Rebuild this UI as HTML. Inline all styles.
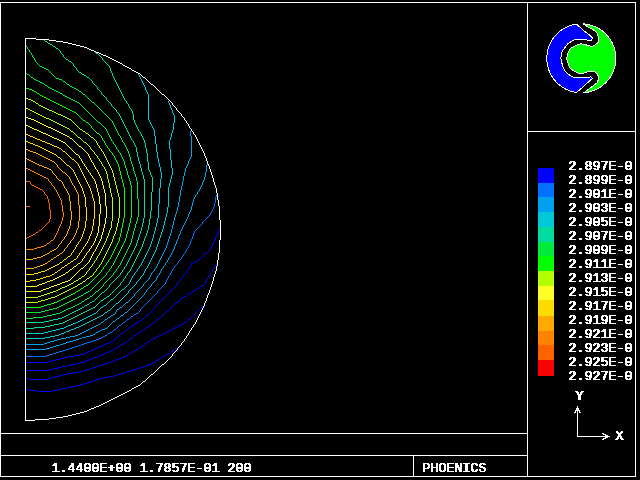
<!DOCTYPE html>
<html><head><meta charset="utf-8"><title>PHOENICS</title>
<style>
html,body{margin:0;padding:0;background:#000;}
body{width:640px;height:480px;overflow:hidden;position:relative;}
svg{position:absolute;left:0;top:0;display:block;}
text{font-family:"Liberation Mono","DejaVu Sans Mono",monospace;font-weight:normal;font-size:13.33px;fill:#fff;white-space:pre;}
</style></head><body>
<svg width="640" height="480" viewBox="0 0 640 480">
<defs><filter id="px" x="0" y="0" width="640" height="480" filterUnits="userSpaceOnUse" color-interpolation-filters="sRGB"><feComponentTransfer result="t"><feFuncR type="discrete" tableValues="1 1"/><feFuncG type="discrete" tableValues="1 1"/><feFuncB type="discrete" tableValues="1 1"/><feFuncA type="discrete" tableValues="0 0 0 0 1 1 1 1 1 1"/></feComponentTransfer><feOffset in="t" dx="1" dy="0" result="o"/><feMerge><feMergeNode in="t"/><feMergeNode in="o"/></feMerge></filter></defs>
<rect x="0" y="0" width="640" height="480" fill="#000"/>

<g fill="#fff" shape-rendering="crispEdges">
<rect x="0" y="2" width="636" height="1"/>
<rect x="0" y="476" width="636" height="1"/>
<rect x="0" y="2" width="1" height="475"/>
<rect x="635" y="2" width="1" height="475"/>
<rect x="527" y="2" width="1" height="475"/>
<rect x="0" y="433" width="528" height="1"/>
<rect x="0" y="455" width="528" height="1"/>
<rect x="413" y="455" width="1" height="22"/>
<rect x="527" y="131" width="109" height="1"/>
</g>
<g shape-rendering="crispEdges">
<path fill="rgb(255,98,0)" d="M26,206h4v1h-4z"/>
<path fill="rgb(255,98,0)" d="M26,181h4v1h-4zM30,182h1v1h-1zM30,183h1v1h-1zM31,184h1v1h-1zM32,185h2v1h-2zM34,186h2v1h-2zM36,187h2v1h-2zM38,188h2v1h-2zM40,189h2v1h-2zM42,190h1v1h-1zM43,191h1v1h-1zM44,192h1v1h-1zM44,193h1v1h-1zM45,194h1v1h-1zM46,195h1v1h-1zM47,196h1v1h-1zM47,197h1v1h-1zM47,198h1v1h-1zM48,199h1v1h-1zM48,200h1v1h-1zM48,201h1v1h-1zM48,202h1v1h-1zM49,203h1v1h-1zM49,204h1v1h-1zM49,205h1v1h-1zM49,206h1v1h-1zM49,207h1v1h-1zM49,208h1v1h-1zM49,209h1v1h-1zM50,210h1v1h-1zM50,211h1v1h-1zM50,212h1v1h-1zM50,213h1v1h-1zM50,214h1v1h-1zM50,215h1v1h-1zM50,216h1v1h-1zM50,217h1v1h-1zM50,218h1v1h-1zM49,219h1v1h-1zM49,220h1v1h-1zM49,221h1v1h-1zM48,222h1v1h-1zM47,223h1v1h-1zM46,224h1v1h-1zM45,225h1v1h-1zM44,226h1v1h-1zM43,227h1v1h-1zM42,228h1v1h-1zM41,229h1v1h-1zM39,230h2v1h-2zM38,231h1v1h-1zM36,232h2v1h-2zM35,233h1v1h-1zM33,234h2v1h-2zM31,235h2v1h-2zM29,236h2v1h-2zM27,237h2v1h-2zM26,238h1v1h-1z"/>
<path fill="rgb(255,130,0)" d="M26,168h2v1h-2zM28,169h2v1h-2zM30,170h2v1h-2zM32,171h2v1h-2zM34,172h2v1h-2zM36,173h2v1h-2zM38,174h2v1h-2zM40,175h2v1h-2zM42,176h2v1h-2zM44,177h2v1h-2zM46,178h2v1h-2zM48,179h1v1h-1zM48,180h1v1h-1zM49,181h1v1h-1zM50,182h1v1h-1zM51,183h1v1h-1zM51,184h1v1h-1zM52,185h1v1h-1zM53,186h1v1h-1zM54,187h1v1h-1zM54,188h1v1h-1zM55,189h1v1h-1zM56,190h1v1h-1zM56,191h1v1h-1zM57,192h1v1h-1zM57,193h1v1h-1zM58,194h1v1h-1zM58,195h1v1h-1zM59,196h1v1h-1zM59,197h1v1h-1zM60,198h1v1h-1zM60,199h1v1h-1zM61,200h1v1h-1zM61,201h1v1h-1zM61,202h1v1h-1zM61,203h1v1h-1zM61,204h1v1h-1zM62,205h1v1h-1zM62,206h1v1h-1zM62,207h1v1h-1zM62,208h1v1h-1zM62,209h1v1h-1zM62,210h1v1h-1zM62,211h1v1h-1zM63,212h1v1h-1zM63,213h1v1h-1zM63,214h1v1h-1zM63,215h1v1h-1zM63,216h1v1h-1zM62,217h1v1h-1zM62,218h1v1h-1zM62,219h1v1h-1zM62,220h1v1h-1zM61,221h1v1h-1zM61,222h1v1h-1zM61,223h1v1h-1zM60,224h1v1h-1zM60,225h1v1h-1zM59,226h1v1h-1zM59,227h1v1h-1zM58,228h1v1h-1zM58,229h1v1h-1zM58,230h1v1h-1zM57,231h1v1h-1zM57,232h1v1h-1zM56,233h1v1h-1zM56,234h1v1h-1zM55,235h1v1h-1zM55,236h1v1h-1zM54,237h1v1h-1zM54,238h1v1h-1zM53,239h1v1h-1zM51,240h2v1h-2zM50,241h1v1h-1zM49,242h1v1h-1zM47,243h2v1h-2zM46,244h1v1h-1zM44,245h2v1h-2zM41,246h3v1h-3zM37,247h4v1h-4zM34,248h3v1h-3zM26,249h8v1h-8z"/>
<path fill="rgb(255,170,0)" d="M26,158h1v1h-1zM27,159h2v1h-2zM29,160h2v1h-2zM31,161h2v1h-2zM33,162h2v1h-2zM35,163h2v1h-2zM37,164h2v1h-2zM39,165h3v1h-3zM42,166h2v1h-2zM44,167h3v1h-3zM47,168h2v1h-2zM49,169h2v1h-2zM51,170h1v1h-1zM52,171h1v1h-1zM52,172h1v1h-1zM53,173h1v1h-1zM54,174h1v1h-1zM55,175h1v1h-1zM56,176h1v1h-1zM56,177h1v1h-1zM57,178h1v1h-1zM58,179h1v1h-1zM59,180h2v1h-2zM61,181h1v1h-1zM62,182h1v1h-1zM62,183h1v1h-1zM63,184h1v1h-1zM63,185h1v1h-1zM64,186h1v1h-1zM64,187h1v1h-1zM65,188h1v1h-1zM66,189h1v1h-1zM66,190h1v1h-1zM67,191h1v1h-1zM67,192h1v1h-1zM68,193h1v1h-1zM68,194h1v1h-1zM69,195h1v1h-1zM69,196h1v1h-1zM69,197h1v1h-1zM69,198h1v1h-1zM69,199h1v1h-1zM69,200h1v1h-1zM70,201h1v1h-1zM70,202h1v1h-1zM70,203h1v1h-1zM70,204h1v1h-1zM70,205h1v1h-1zM70,206h1v1h-1zM70,207h1v1h-1zM70,208h1v1h-1zM70,209h1v1h-1zM70,210h1v1h-1zM71,211h1v1h-1zM71,212h1v1h-1zM71,213h1v1h-1zM71,214h1v1h-1zM71,215h1v1h-1zM71,216h1v1h-1zM71,217h1v1h-1zM71,218h1v1h-1zM71,219h1v1h-1zM70,220h1v1h-1zM70,221h1v1h-1zM70,222h1v1h-1zM70,223h1v1h-1zM70,224h1v1h-1zM70,225h1v1h-1zM69,226h1v1h-1zM69,227h1v1h-1zM69,228h1v1h-1zM68,229h1v1h-1zM68,230h1v1h-1zM67,231h1v1h-1zM67,232h1v1h-1zM67,233h1v1h-1zM66,234h1v1h-1zM66,235h1v1h-1zM65,236h1v1h-1zM64,237h1v1h-1zM64,238h1v1h-1zM63,239h1v1h-1zM62,240h1v1h-1zM61,241h1v1h-1zM61,242h1v1h-1zM60,243h1v1h-1zM59,244h1v1h-1zM58,245h1v1h-1zM58,246h1v1h-1zM57,247h1v1h-1zM56,248h1v1h-1zM54,249h2v1h-2zM52,250h2v1h-2zM50,251h2v1h-2zM49,252h1v1h-1zM47,253h2v1h-2zM45,254h2v1h-2zM43,255h2v1h-2zM41,256h2v1h-2zM37,257h4v1h-4zM33,258h4v1h-4zM26,259h7v1h-7z"/>
<path fill="rgb(255,170,0)" d="M26,149h2v1h-2zM28,150h2v1h-2zM30,151h3v1h-3zM33,152h3v1h-3zM36,153h2v1h-2zM38,154h2v1h-2zM40,155h2v1h-2zM42,156h2v1h-2zM44,157h2v1h-2zM46,158h2v1h-2zM48,159h2v1h-2zM50,160h2v1h-2zM52,161h2v1h-2zM54,162h1v1h-1zM55,163h1v1h-1zM56,164h1v1h-1zM57,165h1v1h-1zM57,166h1v1h-1zM58,167h1v1h-1zM59,168h1v1h-1zM60,169h1v1h-1zM61,170h1v1h-1zM62,171h1v1h-1zM63,172h2v1h-2zM65,173h1v1h-1zM66,174h1v1h-1zM67,175h1v1h-1zM68,176h1v1h-1zM69,177h1v1h-1zM69,178h1v1h-1zM70,179h1v1h-1zM70,180h1v1h-1zM71,181h1v1h-1zM71,182h1v1h-1zM72,183h1v1h-1zM72,184h1v1h-1zM73,185h1v1h-1zM74,186h1v1h-1zM74,187h1v1h-1zM75,188h1v1h-1zM75,189h1v1h-1zM76,190h1v1h-1zM76,191h1v1h-1zM77,192h1v1h-1zM77,193h1v1h-1zM78,194h1v1h-1zM78,195h1v1h-1zM78,196h1v1h-1zM78,197h1v1h-1zM78,198h1v1h-1zM78,199h1v1h-1zM78,200h1v1h-1zM78,201h1v1h-1zM78,202h1v1h-1zM78,203h1v1h-1zM78,204h1v1h-1zM79,205h1v1h-1zM79,206h1v1h-1zM79,207h1v1h-1zM79,208h1v1h-1zM79,209h1v1h-1zM79,210h1v1h-1zM79,211h1v1h-1zM79,212h1v1h-1zM79,213h1v1h-1zM79,214h1v1h-1zM79,215h1v1h-1zM79,216h1v1h-1zM79,217h1v1h-1zM79,218h1v1h-1zM79,219h1v1h-1zM79,220h1v1h-1zM78,221h1v1h-1zM78,222h1v1h-1zM78,223h1v1h-1zM78,224h1v1h-1zM78,225h1v1h-1zM78,226h1v1h-1zM78,227h1v1h-1zM77,228h1v1h-1zM77,229h1v1h-1zM76,230h1v1h-1zM76,231h1v1h-1zM76,232h1v1h-1zM75,233h1v1h-1zM75,234h1v1h-1zM74,235h1v1h-1zM74,236h1v1h-1zM73,237h1v1h-1zM73,238h1v1h-1zM72,239h1v1h-1zM71,240h1v1h-1zM70,241h1v1h-1zM70,242h1v1h-1zM69,243h1v1h-1zM68,244h1v1h-1zM67,245h1v1h-1zM67,246h1v1h-1zM66,247h1v1h-1zM65,248h1v1h-1zM64,249h1v1h-1zM64,250h1v1h-1zM63,251h1v1h-1zM62,252h1v1h-1zM60,253h2v1h-2zM59,254h1v1h-1zM57,255h2v1h-2zM56,256h1v1h-1zM54,257h2v1h-2zM53,258h1v1h-1zM51,259h2v1h-2zM50,260h1v1h-1zM48,261h2v1h-2zM47,262h1v1h-1zM45,263h2v1h-2zM43,264h2v1h-2zM40,265h3v1h-3zM37,266h3v1h-3zM34,267h3v1h-3zM26,268h8v1h-8z"/>
<path fill="rgb(255,220,0)" d="M26,141h2v1h-2zM28,142h2v1h-2zM30,143h3v1h-3zM33,144h2v1h-2zM35,145h3v1h-3zM38,146h2v1h-2zM40,147h2v1h-2zM42,148h2v1h-2zM44,149h2v1h-2zM46,150h2v1h-2zM48,151h2v1h-2zM50,152h2v1h-2zM52,153h2v1h-2zM54,154h2v1h-2zM56,155h1v1h-1zM57,156h1v1h-1zM58,157h2v1h-2zM60,158h1v1h-1zM61,159h1v1h-1zM62,160h1v1h-1zM63,161h1v1h-1zM64,162h1v1h-1zM65,163h1v1h-1zM66,164h1v1h-1zM67,165h2v1h-2zM69,166h1v1h-1zM70,167h1v1h-1zM71,168h1v1h-1zM72,169h1v1h-1zM73,170h1v1h-1zM73,171h1v1h-1zM74,172h1v1h-1zM74,173h1v1h-1zM75,174h1v1h-1zM75,175h1v1h-1zM76,176h1v1h-1zM76,177h1v1h-1zM77,178h1v1h-1zM77,179h1v1h-1zM78,180h1v1h-1zM78,181h1v1h-1zM79,182h1v1h-1zM79,183h1v1h-1zM80,184h1v1h-1zM80,185h1v1h-1zM81,186h1v1h-1zM81,187h1v1h-1zM82,188h1v1h-1zM82,189h1v1h-1zM82,190h1v1h-1zM83,191h1v1h-1zM83,192h1v1h-1zM83,193h1v1h-1zM84,194h1v1h-1zM84,195h1v1h-1zM84,196h1v1h-1zM85,197h1v1h-1zM85,198h1v1h-1zM85,199h1v1h-1zM85,200h1v1h-1zM85,201h1v1h-1zM85,202h1v1h-1zM85,203h1v1h-1zM85,204h1v1h-1zM85,205h1v1h-1zM85,206h1v1h-1zM86,207h1v1h-1zM86,208h1v1h-1zM86,209h1v1h-1zM86,210h1v1h-1zM86,211h1v1h-1zM86,212h1v1h-1zM86,213h1v1h-1zM86,214h1v1h-1zM86,215h1v1h-1zM86,216h1v1h-1zM86,217h1v1h-1zM86,218h1v1h-1zM86,219h1v1h-1zM86,220h1v1h-1zM85,221h1v1h-1zM85,222h1v1h-1zM85,223h1v1h-1zM85,224h1v1h-1zM85,225h1v1h-1zM85,226h1v1h-1zM85,227h1v1h-1zM84,228h1v1h-1zM84,229h1v1h-1zM84,230h1v1h-1zM83,231h1v1h-1zM83,232h1v1h-1zM83,233h1v1h-1zM82,234h1v1h-1zM82,235h1v1h-1zM82,236h1v1h-1zM81,237h1v1h-1zM81,238h1v1h-1zM80,239h1v1h-1zM80,240h1v1h-1zM79,241h1v1h-1zM78,242h1v1h-1zM78,243h1v1h-1zM77,244h1v1h-1zM76,245h1v1h-1zM76,246h1v1h-1zM75,247h1v1h-1zM75,248h1v1h-1zM74,249h1v1h-1zM73,250h1v1h-1zM73,251h1v1h-1zM72,252h1v1h-1zM71,253h1v1h-1zM71,254h1v1h-1zM70,255h1v1h-1zM68,256h2v1h-2zM67,257h1v1h-1zM66,258h1v1h-1zM64,259h2v1h-2zM63,260h1v1h-1zM62,261h1v1h-1zM60,262h2v1h-2zM59,263h1v1h-1zM57,264h2v1h-2zM55,265h2v1h-2zM53,266h2v1h-2zM51,267h2v1h-2zM49,268h2v1h-2zM47,269h2v1h-2zM45,270h2v1h-2zM41,271h4v1h-4zM38,272h3v1h-3zM34,273h4v1h-4zM26,274h8v1h-8z"/>
<path fill="rgb(255,220,0)" d="M26,134h2v1h-2zM28,135h2v1h-2zM30,136h3v1h-3zM33,137h2v1h-2zM35,138h2v1h-2zM37,139h3v1h-3zM40,140h2v1h-2zM42,141h3v1h-3zM45,142h2v1h-2zM47,143h3v1h-3zM50,144h2v1h-2zM52,145h2v1h-2zM54,146h3v1h-3zM57,147h2v1h-2zM59,148h2v1h-2zM61,149h1v1h-1zM62,150h1v1h-1zM63,151h2v1h-2zM65,152h1v1h-1zM66,153h1v1h-1zM67,154h1v1h-1zM68,155h1v1h-1zM69,156h1v1h-1zM70,157h1v1h-1zM71,158h1v1h-1zM72,159h2v1h-2zM74,160h1v1h-1zM75,161h1v1h-1zM76,162h1v1h-1zM77,163h1v1h-1zM78,164h1v1h-1zM78,165h1v1h-1zM79,166h1v1h-1zM79,167h1v1h-1zM80,168h1v1h-1zM80,169h1v1h-1zM81,170h1v1h-1zM81,171h1v1h-1zM82,172h1v1h-1zM82,173h1v1h-1zM83,174h1v1h-1zM83,175h1v1h-1zM84,176h1v1h-1zM84,177h1v1h-1zM85,178h1v1h-1zM85,179h1v1h-1zM86,180h1v1h-1zM86,181h1v1h-1zM87,182h1v1h-1zM87,183h1v1h-1zM88,184h1v1h-1zM88,185h1v1h-1zM89,186h1v1h-1zM89,187h1v1h-1zM90,188h1v1h-1zM90,189h1v1h-1zM90,190h1v1h-1zM91,191h1v1h-1zM91,192h1v1h-1zM91,193h1v1h-1zM92,194h1v1h-1zM92,195h1v1h-1zM92,196h1v1h-1zM92,197h1v1h-1zM93,198h1v1h-1zM93,199h1v1h-1zM93,200h1v1h-1zM94,201h1v1h-1zM94,202h1v1h-1zM94,203h1v1h-1zM94,204h1v1h-1zM94,205h1v1h-1zM94,206h1v1h-1zM94,207h1v1h-1zM94,208h1v1h-1zM94,209h1v1h-1zM94,210h1v1h-1zM94,211h1v1h-1zM94,212h1v1h-1zM94,213h1v1h-1zM94,214h1v1h-1zM94,215h1v1h-1zM94,216h1v1h-1zM94,217h1v1h-1zM94,218h1v1h-1zM93,219h1v1h-1zM93,220h1v1h-1zM93,221h1v1h-1zM93,222h1v1h-1zM93,223h1v1h-1zM93,224h1v1h-1zM93,225h1v1h-1zM92,226h1v1h-1zM92,227h1v1h-1zM92,228h1v1h-1zM92,229h1v1h-1zM92,230h1v1h-1zM91,231h1v1h-1zM91,232h1v1h-1zM91,233h1v1h-1zM90,234h1v1h-1zM90,235h1v1h-1zM89,236h1v1h-1zM89,237h1v1h-1zM89,238h1v1h-1zM88,239h1v1h-1zM88,240h1v1h-1zM87,241h1v1h-1zM87,242h1v1h-1zM86,243h1v1h-1zM85,244h1v1h-1zM85,245h1v1h-1zM84,246h1v1h-1zM83,247h1v1h-1zM83,248h1v1h-1zM82,249h1v1h-1zM81,250h1v1h-1zM81,251h1v1h-1zM80,252h1v1h-1zM79,253h1v1h-1zM79,254h1v1h-1zM78,255h1v1h-1zM77,256h1v1h-1zM77,257h1v1h-1zM76,258h1v1h-1zM74,259h2v1h-2zM73,260h1v1h-1zM71,261h2v1h-2zM70,262h1v1h-1zM68,263h2v1h-2zM67,264h1v1h-1zM65,265h2v1h-2zM64,266h1v1h-1zM62,267h2v1h-2zM61,268h1v1h-1zM60,269h1v1h-1zM58,270h2v1h-2zM57,271h1v1h-1zM55,272h2v1h-2zM54,273h1v1h-1zM52,274h2v1h-2zM50,275h2v1h-2zM46,276h4v1h-4zM43,277h3v1h-3zM40,278h3v1h-3zM36,279h4v1h-4zM30,280h6v1h-6zM26,281h4v1h-4z"/>
<path fill="rgb(255,255,40)" d="M26,125h2v1h-2zM28,126h2v1h-2zM30,127h2v1h-2zM32,128h2v1h-2zM34,129h3v1h-3zM37,130h2v1h-2zM39,131h2v1h-2zM41,132h2v1h-2zM43,133h3v1h-3zM46,134h2v1h-2zM48,135h2v1h-2zM50,136h2v1h-2zM52,137h2v1h-2zM54,138h3v1h-3zM57,139h2v1h-2zM59,140h2v1h-2zM61,141h2v1h-2zM63,142h2v1h-2zM65,143h1v1h-1zM66,144h1v1h-1zM67,145h1v1h-1zM68,146h1v1h-1zM69,147h1v1h-1zM70,148h1v1h-1zM71,149h1v1h-1zM72,150h1v1h-1zM73,151h1v1h-1zM74,152h1v1h-1zM75,153h1v1h-1zM76,154h2v1h-2zM78,155h1v1h-1zM79,156h1v1h-1zM79,157h1v1h-1zM80,158h1v1h-1zM81,159h1v1h-1zM81,160h1v1h-1zM82,161h1v1h-1zM82,162h1v1h-1zM83,163h1v1h-1zM84,164h1v1h-1zM84,165h1v1h-1zM85,166h1v1h-1zM86,167h1v1h-1zM86,168h1v1h-1zM87,169h1v1h-1zM88,170h1v1h-1zM88,171h1v1h-1zM89,172h1v1h-1zM90,173h1v1h-1zM90,174h1v1h-1zM91,175h1v1h-1zM92,176h1v1h-1zM92,177h1v1h-1zM93,178h1v1h-1zM94,179h1v1h-1zM94,180h1v1h-1zM95,181h1v1h-1zM95,182h1v1h-1zM95,183h1v1h-1zM96,184h1v1h-1zM96,185h1v1h-1zM96,186h1v1h-1zM96,187h1v1h-1zM97,188h1v1h-1zM97,189h1v1h-1zM97,190h1v1h-1zM97,191h1v1h-1zM98,192h1v1h-1zM98,193h1v1h-1zM98,194h1v1h-1zM98,195h1v1h-1zM99,196h1v1h-1zM99,197h1v1h-1zM99,198h1v1h-1zM99,199h1v1h-1zM99,200h1v1h-1zM99,201h1v1h-1zM99,202h1v1h-1zM99,203h1v1h-1zM100,204h1v1h-1zM100,205h1v1h-1zM100,206h1v1h-1zM100,207h1v1h-1zM100,208h1v1h-1zM100,209h1v1h-1zM100,210h1v1h-1zM100,211h1v1h-1zM100,212h1v1h-1zM100,213h1v1h-1zM99,214h1v1h-1zM99,215h1v1h-1zM99,216h1v1h-1zM99,217h1v1h-1zM99,218h1v1h-1zM99,219h1v1h-1zM99,220h1v1h-1zM99,221h1v1h-1zM99,222h1v1h-1zM99,223h1v1h-1zM99,224h1v1h-1zM99,225h1v1h-1zM98,226h1v1h-1zM98,227h1v1h-1zM98,228h1v1h-1zM98,229h1v1h-1zM98,230h1v1h-1zM98,231h1v1h-1zM98,232h1v1h-1zM97,233h1v1h-1zM97,234h1v1h-1zM97,235h1v1h-1zM96,236h1v1h-1zM96,237h1v1h-1zM95,238h1v1h-1zM95,239h1v1h-1zM95,240h1v1h-1zM94,241h1v1h-1zM94,242h1v1h-1zM93,243h1v1h-1zM93,244h1v1h-1zM92,245h1v1h-1zM91,246h1v1h-1zM91,247h1v1h-1zM90,248h1v1h-1zM89,249h1v1h-1zM89,250h1v1h-1zM88,251h1v1h-1zM87,252h1v1h-1zM86,253h1v1h-1zM86,254h1v1h-1zM85,255h1v1h-1zM84,256h1v1h-1zM84,257h1v1h-1zM83,258h1v1h-1zM82,259h1v1h-1zM82,260h1v1h-1zM81,261h1v1h-1zM80,262h1v1h-1zM78,263h2v1h-2zM77,264h1v1h-1zM76,265h1v1h-1zM74,266h2v1h-2zM73,267h1v1h-1zM72,268h1v1h-1zM70,269h2v1h-2zM69,270h1v1h-1zM68,271h1v1h-1zM66,272h2v1h-2zM65,273h1v1h-1zM63,274h2v1h-2zM61,275h2v1h-2zM59,276h2v1h-2zM57,277h2v1h-2zM55,278h2v1h-2zM53,279h2v1h-2zM50,280h3v1h-3zM47,281h3v1h-3zM45,282h2v1h-2zM42,283h3v1h-3zM39,284h3v1h-3zM37,285h2v1h-2zM26,286h11v1h-11z"/>
<path fill="rgb(255,255,40)" d="M26,117h2v1h-2zM28,118h3v1h-3zM31,119h3v1h-3zM34,120h2v1h-2zM36,121h2v1h-2zM38,122h2v1h-2zM40,123h2v1h-2zM42,124h2v1h-2zM44,125h2v1h-2zM46,126h2v1h-2zM48,127h3v1h-3zM51,128h2v1h-2zM53,129h2v1h-2zM55,130h2v1h-2zM57,131h2v1h-2zM59,132h2v1h-2zM61,133h2v1h-2zM63,134h2v1h-2zM65,135h2v1h-2zM67,136h2v1h-2zM69,137h1v1h-1zM70,138h2v1h-2zM72,139h1v1h-1zM73,140h1v1h-1zM74,141h1v1h-1zM75,142h1v1h-1zM76,143h1v1h-1zM77,144h1v1h-1zM78,145h1v1h-1zM79,146h2v1h-2zM81,147h1v1h-1zM82,148h1v1h-1zM83,149h1v1h-1zM84,150h1v1h-1zM85,151h1v1h-1zM86,152h1v1h-1zM87,153h1v1h-1zM88,154h1v1h-1zM88,155h1v1h-1zM89,156h1v1h-1zM89,157h1v1h-1zM90,158h1v1h-1zM90,159h1v1h-1zM91,160h1v1h-1zM91,161h1v1h-1zM92,162h1v1h-1zM93,163h1v1h-1zM93,164h1v1h-1zM94,165h1v1h-1zM94,166h1v1h-1zM95,167h1v1h-1zM95,168h1v1h-1zM96,169h1v1h-1zM97,170h1v1h-1zM97,171h1v1h-1zM98,172h1v1h-1zM98,173h1v1h-1zM99,174h1v1h-1zM99,175h1v1h-1zM100,176h1v1h-1zM100,177h1v1h-1zM101,178h1v1h-1zM101,179h1v1h-1zM101,180h1v1h-1zM102,181h1v1h-1zM102,182h1v1h-1zM102,183h1v1h-1zM102,184h1v1h-1zM103,185h1v1h-1zM103,186h1v1h-1zM103,187h1v1h-1zM103,188h1v1h-1zM104,189h1v1h-1zM104,190h1v1h-1zM104,191h1v1h-1zM104,192h1v1h-1zM105,193h1v1h-1zM105,194h1v1h-1zM105,195h1v1h-1zM105,196h1v1h-1zM105,197h1v1h-1zM105,198h1v1h-1zM105,199h1v1h-1zM105,200h1v1h-1zM105,201h1v1h-1zM105,202h1v1h-1zM105,203h1v1h-1zM105,204h1v1h-1zM105,205h1v1h-1zM106,206h1v1h-1zM106,207h1v1h-1zM106,208h1v1h-1zM106,209h1v1h-1zM106,210h1v1h-1zM106,211h1v1h-1zM106,212h1v1h-1zM106,213h1v1h-1zM106,214h1v1h-1zM106,215h1v1h-1zM106,216h1v1h-1zM106,217h1v1h-1zM105,218h1v1h-1zM105,219h1v1h-1zM105,220h1v1h-1zM105,221h1v1h-1zM105,222h1v1h-1zM105,223h1v1h-1zM104,224h1v1h-1zM104,225h1v1h-1zM104,226h1v1h-1zM104,227h1v1h-1zM103,228h1v1h-1zM103,229h1v1h-1zM103,230h1v1h-1zM103,231h1v1h-1zM102,232h1v1h-1zM102,233h1v1h-1zM102,234h1v1h-1zM101,235h1v1h-1zM101,236h1v1h-1zM101,237h1v1h-1zM101,238h1v1h-1zM100,239h1v1h-1zM100,240h1v1h-1zM99,241h1v1h-1zM99,242h1v1h-1zM98,243h1v1h-1zM98,244h1v1h-1zM97,245h1v1h-1zM97,246h1v1h-1zM96,247h1v1h-1zM96,248h1v1h-1zM95,249h1v1h-1zM95,250h1v1h-1zM94,251h1v1h-1zM93,252h1v1h-1zM93,253h1v1h-1zM92,254h1v1h-1zM92,255h1v1h-1zM91,256h1v1h-1zM91,257h1v1h-1zM90,258h1v1h-1zM90,259h1v1h-1zM89,260h1v1h-1zM89,261h1v1h-1zM88,262h1v1h-1zM87,263h1v1h-1zM86,264h1v1h-1zM85,265h1v1h-1zM84,266h1v1h-1zM83,267h1v1h-1zM81,268h2v1h-2zM80,269h1v1h-1zM79,270h1v1h-1zM78,271h1v1h-1zM77,272h1v1h-1zM76,273h1v1h-1zM75,274h1v1h-1zM74,275h1v1h-1zM73,276h1v1h-1zM72,277h1v1h-1zM71,278h1v1h-1zM70,279h1v1h-1zM68,280h2v1h-2zM65,281h3v1h-3zM62,282h3v1h-3zM60,283h2v1h-2zM57,284h3v1h-3zM54,285h3v1h-3zM51,286h3v1h-3zM49,287h2v1h-2zM46,288h3v1h-3zM43,289h3v1h-3zM41,290h2v1h-2zM26,291h15v1h-15z"/>
<path fill="rgb(180,255,0)" d="M26,108h2v1h-2zM28,109h2v1h-2zM30,110h2v1h-2zM32,111h2v1h-2zM34,112h2v1h-2zM36,113h2v1h-2zM38,114h2v1h-2zM40,115h2v1h-2zM42,116h2v1h-2zM44,117h2v1h-2zM46,118h3v1h-3zM49,119h2v1h-2zM51,120h2v1h-2zM53,121h2v1h-2zM55,122h2v1h-2zM57,123h2v1h-2zM59,124h2v1h-2zM61,125h2v1h-2zM63,126h2v1h-2zM65,127h2v1h-2zM67,128h2v1h-2zM69,129h1v1h-1zM70,130h1v1h-1zM71,131h2v1h-2zM73,132h1v1h-1zM74,133h1v1h-1zM75,134h1v1h-1zM76,135h1v1h-1zM77,136h1v1h-1zM78,137h2v1h-2zM80,138h1v1h-1zM81,139h1v1h-1zM82,140h1v1h-1zM83,141h1v1h-1zM84,142h2v1h-2zM86,143h1v1h-1zM87,144h1v1h-1zM88,145h1v1h-1zM89,146h1v1h-1zM90,147h1v1h-1zM90,148h1v1h-1zM91,149h1v1h-1zM92,150h1v1h-1zM93,151h1v1h-1zM94,152h1v1h-1zM94,153h1v1h-1zM95,154h1v1h-1zM96,155h1v1h-1zM97,156h1v1h-1zM97,157h1v1h-1zM98,158h1v1h-1zM99,159h1v1h-1zM99,160h1v1h-1zM100,161h1v1h-1zM101,162h1v1h-1zM101,163h1v1h-1zM102,164h1v1h-1zM102,165h1v1h-1zM103,166h1v1h-1zM104,167h1v1h-1zM104,168h1v1h-1zM105,169h1v1h-1zM105,170h1v1h-1zM106,171h1v1h-1zM106,172h1v1h-1zM106,173h1v1h-1zM107,174h1v1h-1zM107,175h1v1h-1zM107,176h1v1h-1zM107,177h1v1h-1zM107,178h1v1h-1zM108,179h1v1h-1zM108,180h1v1h-1zM108,181h1v1h-1zM108,182h1v1h-1zM109,183h1v1h-1zM109,184h1v1h-1zM109,185h1v1h-1zM109,186h1v1h-1zM109,187h1v1h-1zM110,188h1v1h-1zM110,189h1v1h-1zM110,190h1v1h-1zM110,191h1v1h-1zM110,192h1v1h-1zM111,193h1v1h-1zM111,194h1v1h-1zM111,195h1v1h-1zM111,196h1v1h-1zM112,197h1v1h-1zM112,198h1v1h-1zM112,199h1v1h-1zM112,200h1v1h-1zM112,201h1v1h-1zM112,202h1v1h-1zM112,203h1v1h-1zM112,204h1v1h-1zM112,205h1v1h-1zM112,206h1v1h-1zM112,207h1v1h-1zM112,208h1v1h-1zM112,209h1v1h-1zM112,210h1v1h-1zM112,211h1v1h-1zM112,212h1v1h-1zM112,213h1v1h-1zM112,214h1v1h-1zM112,215h1v1h-1zM112,216h1v1h-1zM112,217h1v1h-1zM112,218h1v1h-1zM112,219h1v1h-1zM112,220h1v1h-1zM111,221h1v1h-1zM111,222h1v1h-1zM111,223h1v1h-1zM111,224h1v1h-1zM111,225h1v1h-1zM111,226h1v1h-1zM111,227h1v1h-1zM110,228h1v1h-1zM110,229h1v1h-1zM109,230h1v1h-1zM109,231h1v1h-1zM109,232h1v1h-1zM108,233h1v1h-1zM108,234h1v1h-1zM108,235h1v1h-1zM107,236h1v1h-1zM107,237h1v1h-1zM106,238h1v1h-1zM106,239h1v1h-1zM106,240h1v1h-1zM105,241h1v1h-1zM105,242h1v1h-1zM104,243h1v1h-1zM104,244h1v1h-1zM103,245h1v1h-1zM103,246h1v1h-1zM102,247h1v1h-1zM102,248h1v1h-1zM101,249h1v1h-1zM101,250h1v1h-1zM100,251h1v1h-1zM100,252h1v1h-1zM99,253h1v1h-1zM99,254h1v1h-1zM98,255h1v1h-1zM97,256h1v1h-1zM97,257h1v1h-1zM96,258h1v1h-1zM96,259h1v1h-1zM95,260h1v1h-1zM94,261h1v1h-1zM94,262h1v1h-1zM93,263h1v1h-1zM92,264h1v1h-1zM92,265h1v1h-1zM91,266h1v1h-1zM90,267h1v1h-1zM89,268h1v1h-1zM89,269h1v1h-1zM88,270h1v1h-1zM87,271h1v1h-1zM86,272h1v1h-1zM86,273h1v1h-1zM85,274h1v1h-1zM84,275h1v1h-1zM82,276h2v1h-2zM81,277h1v1h-1zM79,278h2v1h-2zM78,279h1v1h-1zM76,280h2v1h-2zM74,281h2v1h-2zM73,282h1v1h-1zM71,283h2v1h-2zM69,284h2v1h-2zM67,285h2v1h-2zM65,286h2v1h-2zM62,287h3v1h-3zM60,288h2v1h-2zM58,289h2v1h-2zM56,290h2v1h-2zM53,291h3v1h-3zM50,292h3v1h-3zM47,293h3v1h-3zM44,294h3v1h-3zM41,295h3v1h-3zM38,296h3v1h-3zM26,297h12v1h-12z"/>
<path fill="rgb(180,255,0)" d="M26,98h2v1h-2zM28,99h3v1h-3zM31,100h2v1h-2zM33,101h2v1h-2zM35,102h1v1h-1zM36,103h2v1h-2zM38,104h1v1h-1zM39,105h2v1h-2zM41,106h2v1h-2zM43,107h2v1h-2zM45,108h2v1h-2zM47,109h2v1h-2zM49,110h3v1h-3zM52,111h2v1h-2zM54,112h2v1h-2zM56,113h2v1h-2zM58,114h3v1h-3zM61,115h2v1h-2zM63,116h2v1h-2zM65,117h2v1h-2zM67,118h2v1h-2zM69,119h2v1h-2zM71,120h1v1h-1zM72,121h1v1h-1zM73,122h1v1h-1zM74,123h1v1h-1zM75,124h1v1h-1zM76,125h1v1h-1zM77,126h1v1h-1zM78,127h1v1h-1zM79,128h1v1h-1zM80,129h2v1h-2zM82,130h1v1h-1zM83,131h2v1h-2zM85,132h1v1h-1zM86,133h2v1h-2zM88,134h1v1h-1zM89,135h1v1h-1zM90,136h1v1h-1zM91,137h2v1h-2zM93,138h1v1h-1zM94,139h1v1h-1zM95,140h1v1h-1zM96,141h1v1h-1zM96,142h1v1h-1zM97,143h1v1h-1zM97,144h1v1h-1zM98,145h1v1h-1zM99,146h1v1h-1zM99,147h1v1h-1zM100,148h1v1h-1zM101,149h1v1h-1zM101,150h1v1h-1zM102,151h1v1h-1zM103,152h1v1h-1zM103,153h1v1h-1zM104,154h1v1h-1zM104,155h1v1h-1zM105,156h1v1h-1zM105,157h1v1h-1zM106,158h1v1h-1zM106,159h1v1h-1zM107,160h1v1h-1zM107,161h1v1h-1zM108,162h1v1h-1zM108,163h1v1h-1zM109,164h1v1h-1zM109,165h1v1h-1zM110,166h1v1h-1zM110,167h1v1h-1zM111,168h1v1h-1zM111,169h1v1h-1zM112,170h1v1h-1zM112,171h1v1h-1zM112,172h1v1h-1zM113,173h1v1h-1zM113,174h1v1h-1zM113,175h1v1h-1zM113,176h1v1h-1zM114,177h1v1h-1zM114,178h1v1h-1zM114,179h1v1h-1zM114,180h1v1h-1zM115,181h1v1h-1zM115,182h1v1h-1zM115,183h1v1h-1zM115,184h1v1h-1zM116,185h1v1h-1zM116,186h1v1h-1zM116,187h1v1h-1zM116,188h1v1h-1zM117,189h1v1h-1zM117,190h1v1h-1zM117,191h1v1h-1zM117,192h1v1h-1zM118,193h1v1h-1zM118,194h1v1h-1zM118,195h1v1h-1zM118,196h1v1h-1zM119,197h1v1h-1zM119,198h1v1h-1zM119,199h1v1h-1zM119,200h1v1h-1zM119,201h1v1h-1zM119,202h1v1h-1zM119,203h1v1h-1zM119,204h1v1h-1zM119,205h1v1h-1zM119,206h1v1h-1zM119,207h1v1h-1zM119,208h1v1h-1zM119,209h1v1h-1zM119,210h1v1h-1zM119,211h1v1h-1zM119,212h1v1h-1zM119,213h1v1h-1zM119,214h1v1h-1zM119,215h1v1h-1zM119,216h1v1h-1zM119,217h1v1h-1zM118,218h1v1h-1zM118,219h1v1h-1zM118,220h1v1h-1zM118,221h1v1h-1zM118,222h1v1h-1zM117,223h1v1h-1zM117,224h1v1h-1zM117,225h1v1h-1zM117,226h1v1h-1zM116,227h1v1h-1zM116,228h1v1h-1zM116,229h1v1h-1zM116,230h1v1h-1zM115,231h1v1h-1zM115,232h1v1h-1zM115,233h1v1h-1zM114,234h1v1h-1zM114,235h1v1h-1zM113,236h1v1h-1zM113,237h1v1h-1zM113,238h1v1h-1zM112,239h1v1h-1zM112,240h1v1h-1zM112,241h1v1h-1zM111,242h1v1h-1zM111,243h1v1h-1zM110,244h1v1h-1zM110,245h1v1h-1zM109,246h1v1h-1zM109,247h1v1h-1zM108,248h1v1h-1zM108,249h1v1h-1zM107,250h1v1h-1zM107,251h1v1h-1zM106,252h1v1h-1zM106,253h1v1h-1zM105,254h1v1h-1zM105,255h1v1h-1zM104,256h1v1h-1zM104,257h1v1h-1zM103,258h1v1h-1zM103,259h1v1h-1zM102,260h1v1h-1zM102,261h1v1h-1zM101,262h1v1h-1zM101,263h1v1h-1zM100,264h1v1h-1zM99,265h1v1h-1zM99,266h1v1h-1zM98,267h1v1h-1zM97,268h1v1h-1zM96,269h1v1h-1zM96,270h1v1h-1zM95,271h1v1h-1zM94,272h1v1h-1zM93,273h1v1h-1zM93,274h1v1h-1zM92,275h1v1h-1zM90,276h2v1h-2zM89,277h1v1h-1zM87,278h2v1h-2zM86,279h1v1h-1zM85,280h1v1h-1zM83,281h2v1h-2zM82,282h1v1h-1zM80,283h2v1h-2zM78,284h2v1h-2zM77,285h1v1h-1zM75,286h2v1h-2zM73,287h2v1h-2zM71,288h2v1h-2zM69,289h2v1h-2zM67,290h2v1h-2zM65,291h2v1h-2zM63,292h2v1h-2zM61,293h2v1h-2zM59,294h2v1h-2zM57,295h2v1h-2zM55,296h2v1h-2zM51,297h4v1h-4zM48,298h3v1h-3zM45,299h3v1h-3zM41,300h4v1h-4zM38,301h3v1h-3zM26,302h12v1h-12z"/>
<path fill="rgb(0,255,0)" d="M26,88h3v1h-3zM29,89h3v1h-3zM32,90h2v1h-2zM34,91h2v1h-2zM36,92h1v1h-1zM37,93h2v1h-2zM39,94h1v1h-1zM40,95h2v1h-2zM42,96h2v1h-2zM44,97h2v1h-2zM46,98h2v1h-2zM48,99h2v1h-2zM50,100h2v1h-2zM52,101h2v1h-2zM54,102h2v1h-2zM56,103h2v1h-2zM58,104h2v1h-2zM60,105h2v1h-2zM62,106h2v1h-2zM64,107h2v1h-2zM66,108h2v1h-2zM68,109h2v1h-2zM70,110h2v1h-2zM72,111h2v1h-2zM74,112h2v1h-2zM76,113h1v1h-1zM77,114h1v1h-1zM78,115h1v1h-1zM79,116h1v1h-1zM80,117h1v1h-1zM81,118h1v1h-1zM82,119h1v1h-1zM83,120h2v1h-2zM85,121h1v1h-1zM86,122h2v1h-2zM88,123h1v1h-1zM89,124h1v1h-1zM90,125h1v1h-1zM91,126h1v1h-1zM91,127h1v1h-1zM92,128h1v1h-1zM93,129h1v1h-1zM94,130h1v1h-1zM95,131h1v1h-1zM96,132h1v1h-1zM97,133h2v1h-2zM99,134h1v1h-1zM100,135h1v1h-1zM101,136h1v1h-1zM101,137h1v1h-1zM102,138h1v1h-1zM102,139h1v1h-1zM103,140h1v1h-1zM104,141h1v1h-1zM104,142h1v1h-1zM105,143h1v1h-1zM105,144h1v1h-1zM106,145h1v1h-1zM107,146h1v1h-1zM107,147h1v1h-1zM108,148h1v1h-1zM109,149h1v1h-1zM109,150h1v1h-1zM110,151h1v1h-1zM111,152h1v1h-1zM112,153h1v1h-1zM112,154h1v1h-1zM113,155h1v1h-1zM114,156h1v1h-1zM114,157h1v1h-1zM115,158h1v1h-1zM115,159h1v1h-1zM116,160h1v1h-1zM116,161h1v1h-1zM117,162h1v1h-1zM117,163h1v1h-1zM118,164h1v1h-1zM118,165h1v1h-1zM118,166h1v1h-1zM119,167h1v1h-1zM119,168h1v1h-1zM119,169h1v1h-1zM119,170h1v1h-1zM120,171h1v1h-1zM120,172h1v1h-1zM120,173h1v1h-1zM120,174h1v1h-1zM121,175h1v1h-1zM121,176h1v1h-1zM121,177h1v1h-1zM121,178h1v1h-1zM122,179h1v1h-1zM122,180h1v1h-1zM122,181h1v1h-1zM122,182h1v1h-1zM123,183h1v1h-1zM123,184h1v1h-1zM123,185h1v1h-1zM123,186h1v1h-1zM124,187h1v1h-1zM124,188h1v1h-1zM124,189h1v1h-1zM124,190h1v1h-1zM124,191h1v1h-1zM124,192h1v1h-1zM124,193h1v1h-1zM124,194h1v1h-1zM124,195h1v1h-1zM124,196h1v1h-1zM124,197h1v1h-1zM124,198h1v1h-1zM124,199h1v1h-1zM124,200h1v1h-1zM124,201h1v1h-1zM124,202h1v1h-1zM124,203h1v1h-1zM124,204h1v1h-1zM124,205h1v1h-1zM124,206h1v1h-1zM124,207h1v1h-1zM124,208h1v1h-1zM124,209h1v1h-1zM124,210h1v1h-1zM124,211h1v1h-1zM124,212h1v1h-1zM124,213h1v1h-1zM124,214h1v1h-1zM124,215h1v1h-1zM124,216h1v1h-1zM124,217h1v1h-1zM123,218h1v1h-1zM123,219h1v1h-1zM123,220h1v1h-1zM123,221h1v1h-1zM123,222h1v1h-1zM122,223h1v1h-1zM122,224h1v1h-1zM122,225h1v1h-1zM122,226h1v1h-1zM122,227h1v1h-1zM121,228h1v1h-1zM121,229h1v1h-1zM121,230h1v1h-1zM121,231h1v1h-1zM121,232h1v1h-1zM120,233h1v1h-1zM120,234h1v1h-1zM120,235h1v1h-1zM120,236h1v1h-1zM119,237h1v1h-1zM119,238h1v1h-1zM119,239h1v1h-1zM119,240h1v1h-1zM118,241h1v1h-1zM118,242h1v1h-1zM117,243h1v1h-1zM117,244h1v1h-1zM116,245h1v1h-1zM116,246h1v1h-1zM115,247h1v1h-1zM115,248h1v1h-1zM114,249h1v1h-1zM114,250h1v1h-1zM113,251h1v1h-1zM113,252h1v1h-1zM112,253h1v1h-1zM112,254h1v1h-1zM111,255h1v1h-1zM111,256h1v1h-1zM110,257h1v1h-1zM110,258h1v1h-1zM109,259h1v1h-1zM108,260h1v1h-1zM108,261h1v1h-1zM107,262h1v1h-1zM106,263h1v1h-1zM106,264h1v1h-1zM105,265h1v1h-1zM104,266h1v1h-1zM103,267h1v1h-1zM103,268h1v1h-1zM102,269h1v1h-1zM101,270h1v1h-1zM101,271h1v1h-1zM100,272h1v1h-1zM99,273h1v1h-1zM98,274h1v1h-1zM97,275h1v1h-1zM96,276h1v1h-1zM95,277h1v1h-1zM94,278h1v1h-1zM93,279h1v1h-1zM92,280h1v1h-1zM91,281h1v1h-1zM90,282h1v1h-1zM89,283h1v1h-1zM88,284h1v1h-1zM86,285h2v1h-2zM84,286h2v1h-2zM83,287h1v1h-1zM81,288h2v1h-2zM80,289h1v1h-1zM78,290h2v1h-2zM76,291h2v1h-2zM75,292h1v1h-1zM73,293h2v1h-2zM71,294h2v1h-2zM69,295h2v1h-2zM67,296h2v1h-2zM65,297h2v1h-2zM63,298h2v1h-2zM61,299h2v1h-2zM59,300h2v1h-2zM57,301h2v1h-2zM54,302h3v1h-3zM51,303h3v1h-3zM47,304h4v1h-4zM44,305h3v1h-3zM41,306h3v1h-3zM26,307h15v1h-15z"/>
<path fill="rgb(0,235,60)" d="M26,73h1v1h-1zM27,74h2v1h-2zM29,75h1v1h-1zM30,76h1v1h-1zM31,77h2v1h-2zM33,78h1v1h-1zM34,79h2v1h-2zM36,80h2v1h-2zM38,81h2v1h-2zM40,82h2v1h-2zM42,83h2v1h-2zM44,84h1v1h-1zM45,85h2v1h-2zM47,86h1v1h-1zM48,87h2v1h-2zM50,88h2v1h-2zM52,89h2v1h-2zM54,90h2v1h-2zM56,91h2v1h-2zM58,92h2v1h-2zM60,93h2v1h-2zM62,94h1v1h-1zM63,95h2v1h-2zM65,96h2v1h-2zM67,97h2v1h-2zM69,98h2v1h-2zM71,99h2v1h-2zM73,100h2v1h-2zM75,101h2v1h-2zM77,102h2v1h-2zM79,103h1v1h-1zM80,104h1v1h-1zM81,105h1v1h-1zM82,106h1v1h-1zM83,107h1v1h-1zM84,108h1v1h-1zM85,109h1v1h-1zM86,110h1v1h-1zM87,111h1v1h-1zM88,112h1v1h-1zM89,113h1v1h-1zM90,114h1v1h-1zM91,115h1v1h-1zM92,116h1v1h-1zM93,117h1v1h-1zM94,118h1v1h-1zM95,119h1v1h-1zM96,120h1v1h-1zM97,121h1v1h-1zM98,122h2v1h-2zM100,123h1v1h-1zM101,124h1v1h-1zM102,125h1v1h-1zM103,126h1v1h-1zM104,127h1v1h-1zM105,128h1v1h-1zM106,129h1v1h-1zM106,130h1v1h-1zM107,131h1v1h-1zM107,132h1v1h-1zM108,133h1v1h-1zM108,134h1v1h-1zM109,135h1v1h-1zM109,136h1v1h-1zM110,137h1v1h-1zM110,138h1v1h-1zM111,139h1v1h-1zM111,140h1v1h-1zM112,141h1v1h-1zM113,142h1v1h-1zM113,143h1v1h-1zM114,144h1v1h-1zM115,145h1v1h-1zM115,146h1v1h-1zM116,147h1v1h-1zM116,148h1v1h-1zM117,149h1v1h-1zM118,150h1v1h-1zM118,151h1v1h-1zM119,152h1v1h-1zM120,153h1v1h-1zM120,154h1v1h-1zM121,155h1v1h-1zM121,156h1v1h-1zM122,157h1v1h-1zM122,158h1v1h-1zM123,159h1v1h-1zM123,160h1v1h-1zM124,161h1v1h-1zM124,162h1v1h-1zM124,163h1v1h-1zM124,164h1v1h-1zM125,165h1v1h-1zM125,166h1v1h-1zM125,167h1v1h-1zM126,168h1v1h-1zM126,169h1v1h-1zM126,170h1v1h-1zM127,171h1v1h-1zM127,172h1v1h-1zM127,173h1v1h-1zM127,174h1v1h-1zM128,175h1v1h-1zM128,176h1v1h-1zM128,177h1v1h-1zM129,178h1v1h-1zM129,179h1v1h-1zM129,180h1v1h-1zM130,181h1v1h-1zM130,182h1v1h-1zM130,183h1v1h-1zM130,184h1v1h-1zM131,185h1v1h-1zM131,186h1v1h-1zM131,187h1v1h-1zM131,188h1v1h-1zM131,189h1v1h-1zM131,190h1v1h-1zM131,191h1v1h-1zM131,192h1v1h-1zM131,193h1v1h-1zM131,194h1v1h-1zM131,195h1v1h-1zM131,196h1v1h-1zM131,197h1v1h-1zM131,198h1v1h-1zM131,199h1v1h-1zM131,200h1v1h-1zM131,201h1v1h-1zM131,202h1v1h-1zM131,203h1v1h-1zM131,204h1v1h-1zM131,205h1v1h-1zM131,206h1v1h-1zM131,207h1v1h-1zM131,208h1v1h-1zM131,209h1v1h-1zM131,210h1v1h-1zM131,211h1v1h-1zM131,212h1v1h-1zM131,213h1v1h-1zM131,214h1v1h-1zM131,215h1v1h-1zM131,216h1v1h-1zM131,217h1v1h-1zM130,218h1v1h-1zM130,219h1v1h-1zM130,220h1v1h-1zM130,221h1v1h-1zM130,222h1v1h-1zM129,223h1v1h-1zM129,224h1v1h-1zM129,225h1v1h-1zM129,226h1v1h-1zM128,227h1v1h-1zM128,228h1v1h-1zM128,229h1v1h-1zM128,230h1v1h-1zM127,231h1v1h-1zM127,232h1v1h-1zM127,233h1v1h-1zM126,234h1v1h-1zM126,235h1v1h-1zM126,236h1v1h-1zM126,237h1v1h-1zM125,238h1v1h-1zM125,239h1v1h-1zM125,240h1v1h-1zM124,241h1v1h-1zM124,242h1v1h-1zM123,243h1v1h-1zM123,244h1v1h-1zM122,245h1v1h-1zM122,246h1v1h-1zM121,247h1v1h-1zM121,248h1v1h-1zM120,249h1v1h-1zM120,250h1v1h-1zM119,251h1v1h-1zM119,252h1v1h-1zM118,253h1v1h-1zM118,254h1v1h-1zM117,255h1v1h-1zM117,256h1v1h-1zM116,257h1v1h-1zM116,258h1v1h-1zM115,259h1v1h-1zM115,260h1v1h-1zM114,261h1v1h-1zM114,262h1v1h-1zM113,263h1v1h-1zM113,264h1v1h-1zM112,265h1v1h-1zM111,266h1v1h-1zM111,267h1v1h-1zM110,268h1v1h-1zM109,269h1v1h-1zM109,270h1v1h-1zM108,271h1v1h-1zM107,272h1v1h-1zM106,273h1v1h-1zM106,274h1v1h-1zM105,275h1v1h-1zM104,276h1v1h-1zM103,277h1v1h-1zM102,278h1v1h-1zM101,279h1v1h-1zM100,280h1v1h-1zM99,281h1v1h-1zM98,282h1v1h-1zM97,283h1v1h-1zM96,284h1v1h-1zM95,285h1v1h-1zM94,286h1v1h-1zM93,287h1v1h-1zM92,288h1v1h-1zM91,289h1v1h-1zM90,290h1v1h-1zM88,291h2v1h-2zM86,292h2v1h-2zM84,293h2v1h-2zM83,294h1v1h-1zM81,295h2v1h-2zM79,296h2v1h-2zM77,297h2v1h-2zM75,298h2v1h-2zM73,299h2v1h-2zM71,300h2v1h-2zM69,301h2v1h-2zM67,302h2v1h-2zM65,303h2v1h-2zM63,304h2v1h-2zM61,305h2v1h-2zM59,306h2v1h-2zM57,307h2v1h-2zM53,308h4v1h-4zM49,309h4v1h-4zM45,310h4v1h-4zM41,311h4v1h-4zM26,312h15v1h-15z"/>
<path fill="rgb(0,235,60)" d="M26,46h1v1h-1zM27,47h1v1h-1zM27,48h1v1h-1zM28,49h1v1h-1zM29,50h1v1h-1zM29,51h1v1h-1zM30,52h1v1h-1zM31,53h1v1h-1zM31,54h1v1h-1zM32,55h1v1h-1zM32,56h1v1h-1zM33,57h1v1h-1zM34,58h1v1h-1zM34,59h1v1h-1zM35,60h1v1h-1zM35,61h1v1h-1zM36,62h1v1h-1zM37,63h1v1h-1zM38,64h1v1h-1zM39,65h1v1h-1zM40,66h2v1h-2zM42,67h2v1h-2zM44,68h2v1h-2zM46,69h2v1h-2zM48,70h1v1h-1zM49,71h1v1h-1zM50,72h1v1h-1zM51,73h1v1h-1zM52,74h1v1h-1zM53,75h1v1h-1zM54,76h1v1h-1zM55,77h1v1h-1zM56,78h3v1h-3zM59,79h3v1h-3zM62,80h1v1h-1zM63,81h2v1h-2zM65,82h1v1h-1zM66,83h1v1h-1zM67,84h2v1h-2zM69,85h1v1h-1zM70,86h2v1h-2zM72,87h2v1h-2zM74,88h2v1h-2zM76,89h2v1h-2zM78,90h1v1h-1zM79,91h2v1h-2zM81,92h1v1h-1zM82,93h1v1h-1zM83,94h2v1h-2zM85,95h1v1h-1zM86,96h1v1h-1zM87,97h1v1h-1zM88,98h1v1h-1zM89,99h1v1h-1zM90,100h1v1h-1zM91,101h1v1h-1zM92,102h2v1h-2zM94,103h1v1h-1zM95,104h1v1h-1zM96,105h1v1h-1zM97,106h1v1h-1zM98,107h1v1h-1zM99,108h1v1h-1zM100,109h1v1h-1zM101,110h1v1h-1zM102,111h1v1h-1zM103,112h1v1h-1zM104,113h1v1h-1zM105,114h1v1h-1zM106,115h1v1h-1zM107,116h1v1h-1zM108,117h1v1h-1zM109,118h1v1h-1zM110,119h1v1h-1zM111,120h1v1h-1zM112,121h1v1h-1zM112,122h1v1h-1zM113,123h1v1h-1zM113,124h1v1h-1zM114,125h1v1h-1zM114,126h1v1h-1zM115,127h1v1h-1zM115,128h1v1h-1zM116,129h1v1h-1zM116,130h1v1h-1zM117,131h1v1h-1zM117,132h1v1h-1zM118,133h1v1h-1zM118,134h1v1h-1zM119,135h1v1h-1zM120,136h1v1h-1zM120,137h1v1h-1zM121,138h1v1h-1zM121,139h1v1h-1zM122,140h1v1h-1zM122,141h1v1h-1zM123,142h1v1h-1zM124,143h1v1h-1zM124,144h1v1h-1zM125,145h1v1h-1zM125,146h1v1h-1zM126,147h1v1h-1zM126,148h1v1h-1zM127,149h1v1h-1zM127,150h1v1h-1zM128,151h1v1h-1zM128,152h1v1h-1zM128,153h1v1h-1zM129,154h1v1h-1zM129,155h1v1h-1zM129,156h1v1h-1zM130,157h1v1h-1zM130,158h1v1h-1zM130,159h1v1h-1zM130,160h1v1h-1zM131,161h1v1h-1zM131,162h1v1h-1zM131,163h1v1h-1zM132,164h1v1h-1zM132,165h1v1h-1zM132,166h1v1h-1zM133,167h1v1h-1zM133,168h1v1h-1zM133,169h1v1h-1zM133,170h1v1h-1zM134,171h1v1h-1zM134,172h1v1h-1zM134,173h1v1h-1zM135,174h1v1h-1zM135,175h1v1h-1zM135,176h1v1h-1zM136,177h1v1h-1zM136,178h1v1h-1zM136,179h1v1h-1zM136,180h1v1h-1zM137,181h1v1h-1zM137,182h1v1h-1zM137,183h1v1h-1zM137,184h1v1h-1zM137,185h1v1h-1zM137,186h1v1h-1zM137,187h1v1h-1zM137,188h1v1h-1zM137,189h1v1h-1zM137,190h1v1h-1zM137,191h1v1h-1zM137,192h1v1h-1zM137,193h1v1h-1zM137,194h1v1h-1zM137,195h1v1h-1zM137,196h1v1h-1zM137,197h1v1h-1zM137,198h1v1h-1zM138,199h1v1h-1zM138,200h1v1h-1zM138,201h1v1h-1zM138,202h1v1h-1zM138,203h1v1h-1zM138,204h1v1h-1zM138,205h1v1h-1zM138,206h1v1h-1zM138,207h1v1h-1zM138,208h1v1h-1zM138,209h1v1h-1zM138,210h1v1h-1zM138,211h1v1h-1zM138,212h1v1h-1zM138,213h1v1h-1zM138,214h1v1h-1zM138,215h1v1h-1zM138,216h1v1h-1zM137,217h1v1h-1zM137,218h1v1h-1zM137,219h1v1h-1zM137,220h1v1h-1zM136,221h1v1h-1zM136,222h1v1h-1zM136,223h1v1h-1zM135,224h1v1h-1zM135,225h1v1h-1zM135,226h1v1h-1zM135,227h1v1h-1zM134,228h1v1h-1zM134,229h1v1h-1zM134,230h1v1h-1zM133,231h1v1h-1zM133,232h1v1h-1zM133,233h1v1h-1zM133,234h1v1h-1zM132,235h1v1h-1zM132,236h1v1h-1zM132,237h1v1h-1zM132,238h1v1h-1zM131,239h1v1h-1zM131,240h1v1h-1zM131,241h1v1h-1zM131,242h1v1h-1zM130,243h1v1h-1zM130,244h1v1h-1zM129,245h1v1h-1zM129,246h1v1h-1zM128,247h1v1h-1zM128,248h1v1h-1zM127,249h1v1h-1zM127,250h1v1h-1zM126,251h1v1h-1zM126,252h1v1h-1zM125,253h1v1h-1zM125,254h1v1h-1zM124,255h1v1h-1zM124,256h1v1h-1zM123,257h1v1h-1zM123,258h1v1h-1zM122,259h1v1h-1zM122,260h1v1h-1zM121,261h1v1h-1zM121,262h1v1h-1zM120,263h1v1h-1zM120,264h1v1h-1zM119,265h1v1h-1zM118,266h1v1h-1zM118,267h1v1h-1zM117,268h1v1h-1zM116,269h1v1h-1zM116,270h1v1h-1zM115,271h1v1h-1zM114,272h1v1h-1zM113,273h1v1h-1zM113,274h1v1h-1zM112,275h1v1h-1zM111,276h1v1h-1zM110,277h1v1h-1zM109,278h1v1h-1zM108,279h1v1h-1zM107,280h1v1h-1zM106,281h1v1h-1zM105,282h1v1h-1zM104,283h1v1h-1zM103,284h1v1h-1zM103,285h1v1h-1zM102,286h1v1h-1zM101,287h1v1h-1zM100,288h1v1h-1zM99,289h1v1h-1zM98,290h1v1h-1zM96,291h2v1h-2zM95,292h1v1h-1zM94,293h1v1h-1zM93,294h1v1h-1zM92,295h1v1h-1zM90,296h2v1h-2zM89,297h1v1h-1zM87,298h2v1h-2zM85,299h2v1h-2zM84,300h1v1h-1zM82,301h2v1h-2zM81,302h1v1h-1zM79,303h2v1h-2zM77,304h2v1h-2zM75,305h2v1h-2zM73,306h2v1h-2zM71,307h2v1h-2zM68,308h3v1h-3zM66,309h2v1h-2zM64,310h2v1h-2zM62,311h2v1h-2zM60,312h2v1h-2zM56,313h4v1h-4zM52,314h4v1h-4zM47,315h5v1h-5zM43,316h4v1h-4zM33,317h10v1h-10zM26,318h7v1h-7z"/>
<path fill="rgb(0,220,160)" d="M44,40h1v1h-1zM45,41h2v1h-2zM47,42h1v1h-1zM48,43h2v1h-2zM50,44h2v1h-2zM52,45h1v1h-1zM53,46h2v1h-2zM55,47h1v1h-1zM56,48h2v1h-2zM58,49h1v1h-1zM59,50h1v1h-1zM60,51h1v1h-1zM60,52h1v1h-1zM61,53h1v1h-1zM62,54h1v1h-1zM63,55h1v1h-1zM63,56h1v1h-1zM64,57h1v1h-1zM65,58h1v1h-1zM66,59h2v1h-2zM68,60h1v1h-1zM69,61h2v1h-2zM71,62h1v1h-1zM72,63h1v1h-1zM73,64h1v1h-1zM73,65h1v1h-1zM74,66h1v1h-1zM75,67h1v1h-1zM76,68h1v1h-1zM76,69h1v1h-1zM77,70h1v1h-1zM78,71h1v1h-1zM79,72h2v1h-2zM81,73h1v1h-1zM82,74h2v1h-2zM84,75h2v1h-2zM86,76h1v1h-1zM87,77h2v1h-2zM89,78h1v1h-1zM90,79h1v1h-1zM91,80h1v1h-1zM92,81h1v1h-1zM92,82h1v1h-1zM93,83h1v1h-1zM94,84h1v1h-1zM95,85h1v1h-1zM96,86h1v1h-1zM97,87h1v1h-1zM97,88h1v1h-1zM98,89h1v1h-1zM99,90h1v1h-1zM100,91h1v1h-1zM101,92h1v1h-1zM101,93h1v1h-1zM102,94h1v1h-1zM103,95h1v1h-1zM104,96h1v1h-1zM105,97h1v1h-1zM106,98h1v1h-1zM106,99h1v1h-1zM107,100h1v1h-1zM108,101h1v1h-1zM109,102h1v1h-1zM110,103h1v1h-1zM111,104h1v1h-1zM111,105h1v1h-1zM112,106h1v1h-1zM113,107h1v1h-1zM114,108h1v1h-1zM115,109h1v1h-1zM116,110h1v1h-1zM116,111h1v1h-1zM117,112h1v1h-1zM118,113h1v1h-1zM119,114h1v1h-1zM119,115h1v1h-1zM120,116h1v1h-1zM120,117h1v1h-1zM121,118h1v1h-1zM121,119h1v1h-1zM122,120h1v1h-1zM122,121h1v1h-1zM123,122h1v1h-1zM123,123h1v1h-1zM124,124h1v1h-1zM124,125h1v1h-1zM125,126h1v1h-1zM125,127h1v1h-1zM126,128h1v1h-1zM126,129h1v1h-1zM127,130h1v1h-1zM127,131h1v1h-1zM128,132h1v1h-1zM128,133h1v1h-1zM129,134h1v1h-1zM129,135h1v1h-1zM130,136h1v1h-1zM130,137h1v1h-1zM131,138h1v1h-1zM131,139h1v1h-1zM132,140h1v1h-1zM133,141h1v1h-1zM133,142h1v1h-1zM134,143h1v1h-1zM134,144h1v1h-1zM135,145h1v1h-1zM135,146h1v1h-1zM136,147h1v1h-1zM136,148h1v1h-1zM136,149h1v1h-1zM136,150h1v1h-1zM136,151h1v1h-1zM137,152h1v1h-1zM137,153h1v1h-1zM137,154h1v1h-1zM137,155h1v1h-1zM137,156h1v1h-1zM138,157h1v1h-1zM138,158h1v1h-1zM138,159h1v1h-1zM138,160h1v1h-1zM139,161h1v1h-1zM139,162h1v1h-1zM139,163h1v1h-1zM140,164h1v1h-1zM140,165h1v1h-1zM140,166h1v1h-1zM140,167h1v1h-1zM141,168h1v1h-1zM141,169h1v1h-1zM141,170h1v1h-1zM141,171h1v1h-1zM142,172h1v1h-1zM142,173h1v1h-1zM142,174h1v1h-1zM143,175h1v1h-1zM143,176h1v1h-1zM143,177h1v1h-1zM143,178h1v1h-1zM144,179h1v1h-1zM144,180h1v1h-1zM144,181h1v1h-1zM144,182h1v1h-1zM144,183h1v1h-1zM144,184h1v1h-1zM144,185h1v1h-1zM144,186h1v1h-1zM144,187h1v1h-1zM144,188h1v1h-1zM144,189h1v1h-1zM144,190h1v1h-1zM144,191h1v1h-1zM144,192h1v1h-1zM144,193h1v1h-1zM144,194h1v1h-1zM144,195h1v1h-1zM144,196h1v1h-1zM144,197h1v1h-1zM144,198h1v1h-1zM144,199h1v1h-1zM144,200h1v1h-1zM144,201h1v1h-1zM144,202h1v1h-1zM144,203h1v1h-1zM144,204h1v1h-1zM144,205h1v1h-1zM144,206h1v1h-1zM144,207h1v1h-1zM144,208h1v1h-1zM144,209h1v1h-1zM144,210h1v1h-1zM144,211h1v1h-1zM144,212h1v1h-1zM144,213h1v1h-1zM144,214h1v1h-1zM144,215h1v1h-1zM144,216h1v1h-1zM144,217h1v1h-1zM143,218h1v1h-1zM143,219h1v1h-1zM143,220h1v1h-1zM143,221h1v1h-1zM143,222h1v1h-1zM142,223h1v1h-1zM142,224h1v1h-1zM142,225h1v1h-1zM142,226h1v1h-1zM141,227h1v1h-1zM141,228h1v1h-1zM141,229h1v1h-1zM141,230h1v1h-1zM140,231h1v1h-1zM140,232h1v1h-1zM140,233h1v1h-1zM139,234h1v1h-1zM139,235h1v1h-1zM139,236h1v1h-1zM138,237h1v1h-1zM138,238h1v1h-1zM138,239h1v1h-1zM137,240h1v1h-1zM137,241h1v1h-1zM137,242h1v1h-1zM136,243h1v1h-1zM136,244h1v1h-1zM136,245h1v1h-1zM135,246h1v1h-1zM135,247h1v1h-1zM134,248h1v1h-1zM134,249h1v1h-1zM133,250h1v1h-1zM133,251h1v1h-1zM132,252h1v1h-1zM132,253h1v1h-1zM131,254h1v1h-1zM131,255h1v1h-1zM130,256h1v1h-1zM130,257h1v1h-1zM129,258h1v1h-1zM129,259h1v1h-1zM128,260h1v1h-1zM128,261h1v1h-1zM127,262h1v1h-1zM127,263h1v1h-1zM126,264h1v1h-1zM126,265h1v1h-1zM125,266h1v1h-1zM124,267h1v1h-1zM124,268h1v1h-1zM123,269h1v1h-1zM122,270h1v1h-1zM122,271h1v1h-1zM121,272h1v1h-1zM120,273h1v1h-1zM120,274h1v1h-1zM119,275h1v1h-1zM118,276h1v1h-1zM117,277h1v1h-1zM116,278h1v1h-1zM115,279h1v1h-1zM114,280h1v1h-1zM113,281h1v1h-1zM112,282h1v1h-1zM111,283h1v1h-1zM110,284h1v1h-1zM109,285h1v1h-1zM109,286h1v1h-1zM108,287h1v1h-1zM107,288h1v1h-1zM106,289h1v1h-1zM105,290h1v1h-1zM104,291h1v1h-1zM102,292h2v1h-2zM101,293h1v1h-1zM100,294h1v1h-1zM99,295h1v1h-1zM98,296h1v1h-1zM97,297h1v1h-1zM96,298h1v1h-1zM95,299h1v1h-1zM94,300h1v1h-1zM92,301h2v1h-2zM90,302h2v1h-2zM89,303h1v1h-1zM87,304h2v1h-2zM85,305h2v1h-2zM84,306h1v1h-1zM82,307h2v1h-2zM80,308h2v1h-2zM78,309h2v1h-2zM76,310h2v1h-2zM74,311h2v1h-2zM72,312h2v1h-2zM70,313h2v1h-2zM68,314h2v1h-2zM66,315h2v1h-2zM64,316h2v1h-2zM62,317h2v1h-2zM58,318h4v1h-4zM53,319h5v1h-5zM49,320h4v1h-4zM44,321h5v1h-5zM26,322h18v1h-18z"/>
<path fill="rgb(0,220,160)" d="M94,51h1v1h-1zM95,52h1v1h-1zM96,53h2v1h-2zM98,54h1v1h-1zM99,55h1v1h-1zM100,56h1v1h-1zM101,57h1v1h-1zM102,58h1v1h-1zM102,59h1v1h-1zM103,60h1v1h-1zM104,61h1v1h-1zM105,62h1v1h-1zM106,63h1v1h-1zM107,64h1v1h-1zM108,65h1v1h-1zM109,66h1v1h-1zM109,67h1v1h-1zM110,68h1v1h-1zM110,69h1v1h-1zM110,70h1v1h-1zM111,71h1v1h-1zM111,72h1v1h-1zM112,73h1v1h-1zM112,74h1v1h-1zM112,75h1v1h-1zM113,76h1v1h-1zM113,77h1v1h-1zM114,78h1v1h-1zM114,79h1v1h-1zM115,80h1v1h-1zM115,81h1v1h-1zM116,82h1v1h-1zM116,83h1v1h-1zM117,84h1v1h-1zM117,85h1v1h-1zM118,86h1v1h-1zM118,87h1v1h-1zM119,88h1v1h-1zM119,89h1v1h-1zM120,90h1v1h-1zM120,91h1v1h-1zM121,92h1v1h-1zM121,93h1v1h-1zM122,94h1v1h-1zM122,95h1v1h-1zM123,96h1v1h-1zM123,97h1v1h-1zM124,98h1v1h-1zM124,99h1v1h-1zM125,100h1v1h-1zM126,101h1v1h-1zM126,102h1v1h-1zM127,103h1v1h-1zM128,104h1v1h-1zM128,105h1v1h-1zM129,106h1v1h-1zM129,107h1v1h-1zM130,108h1v1h-1zM131,109h1v1h-1zM131,110h1v1h-1zM132,111h1v1h-1zM132,112h1v1h-1zM132,113h1v1h-1zM133,114h1v1h-1zM133,115h1v1h-1zM133,116h1v1h-1zM133,117h1v1h-1zM133,118h1v1h-1zM133,119h1v1h-1zM134,120h1v1h-1zM134,121h1v1h-1zM134,122h1v1h-1zM135,123h1v1h-1zM135,124h1v1h-1zM136,125h1v1h-1zM136,126h1v1h-1zM137,127h1v1h-1zM137,128h1v1h-1zM138,129h1v1h-1zM138,130h1v1h-1zM139,131h1v1h-1zM140,132h1v1h-1zM140,133h1v1h-1zM141,134h1v1h-1zM141,135h1v1h-1zM142,136h1v1h-1zM142,137h1v1h-1zM143,138h1v1h-1zM143,139h1v1h-1zM144,140h1v1h-1zM144,141h1v1h-1zM144,142h1v1h-1zM145,143h1v1h-1zM145,144h1v1h-1zM145,145h1v1h-1zM145,146h1v1h-1zM145,147h1v1h-1zM146,148h1v1h-1zM146,149h1v1h-1zM146,150h1v1h-1zM146,151h1v1h-1zM146,152h1v1h-1zM147,153h1v1h-1zM147,154h1v1h-1zM147,155h1v1h-1zM147,156h1v1h-1zM147,157h1v1h-1zM147,158h1v1h-1zM147,159h1v1h-1zM147,160h1v1h-1zM147,161h1v1h-1zM148,162h1v1h-1zM148,163h1v1h-1zM148,164h1v1h-1zM148,165h1v1h-1zM148,166h1v1h-1zM148,167h1v1h-1zM148,168h1v1h-1zM148,169h1v1h-1zM149,170h1v1h-1zM149,171h1v1h-1zM150,172h1v1h-1zM150,173h1v1h-1zM150,174h1v1h-1zM151,175h1v1h-1zM151,176h1v1h-1zM152,177h1v1h-1zM152,178h1v1h-1zM152,179h1v1h-1zM152,180h1v1h-1zM152,181h1v1h-1zM152,182h1v1h-1zM152,183h1v1h-1zM152,184h1v1h-1zM152,185h1v1h-1zM152,186h1v1h-1zM152,187h1v1h-1zM152,188h1v1h-1zM152,189h1v1h-1zM152,190h1v1h-1zM152,191h1v1h-1zM151,192h1v1h-1zM151,193h1v1h-1zM151,194h1v1h-1zM151,195h1v1h-1zM151,196h1v1h-1zM151,197h1v1h-1zM151,198h1v1h-1zM151,199h1v1h-1zM151,200h1v1h-1zM151,201h1v1h-1zM151,202h1v1h-1zM151,203h1v1h-1zM151,204h1v1h-1zM151,205h1v1h-1zM151,206h1v1h-1zM151,207h1v1h-1zM151,208h1v1h-1zM151,209h1v1h-1zM151,210h1v1h-1zM150,211h1v1h-1zM150,212h1v1h-1zM150,213h1v1h-1zM150,214h1v1h-1zM150,215h1v1h-1zM150,216h1v1h-1zM150,217h1v1h-1zM150,218h1v1h-1zM149,219h1v1h-1zM149,220h1v1h-1zM149,221h1v1h-1zM149,222h1v1h-1zM149,223h1v1h-1zM149,224h1v1h-1zM148,225h1v1h-1zM148,226h1v1h-1zM148,227h1v1h-1zM148,228h1v1h-1zM148,229h1v1h-1zM147,230h1v1h-1zM147,231h1v1h-1zM147,232h1v1h-1zM146,233h1v1h-1zM146,234h1v1h-1zM146,235h1v1h-1zM145,236h1v1h-1zM145,237h1v1h-1zM144,238h1v1h-1zM144,239h1v1h-1zM144,240h1v1h-1zM143,241h1v1h-1zM143,242h1v1h-1zM143,243h1v1h-1zM142,244h1v1h-1zM142,245h1v1h-1zM142,246h1v1h-1zM141,247h1v1h-1zM141,248h1v1h-1zM140,249h1v1h-1zM140,250h1v1h-1zM139,251h1v1h-1zM139,252h1v1h-1zM138,253h1v1h-1zM138,254h1v1h-1zM137,255h1v1h-1zM137,256h1v1h-1zM136,257h1v1h-1zM136,258h1v1h-1zM135,259h1v1h-1zM135,260h1v1h-1zM134,261h1v1h-1zM134,262h1v1h-1zM133,263h1v1h-1zM133,264h1v1h-1zM132,265h1v1h-1zM132,266h1v1h-1zM131,267h1v1h-1zM131,268h1v1h-1zM130,269h1v1h-1zM130,270h1v1h-1zM129,271h1v1h-1zM128,272h1v1h-1zM127,273h1v1h-1zM127,274h1v1h-1zM126,275h1v1h-1zM125,276h1v1h-1zM125,277h1v1h-1zM124,278h1v1h-1zM123,279h1v1h-1zM123,280h1v1h-1zM122,281h1v1h-1zM121,282h1v1h-1zM120,283h1v1h-1zM120,284h1v1h-1zM119,285h1v1h-1zM118,286h1v1h-1zM117,287h1v1h-1zM116,288h1v1h-1zM115,289h1v1h-1zM114,290h1v1h-1zM113,291h1v1h-1zM112,292h1v1h-1zM111,293h1v1h-1zM110,294h1v1h-1zM109,295h1v1h-1zM107,296h2v1h-2zM106,297h1v1h-1zM104,298h2v1h-2zM103,299h1v1h-1zM101,300h2v1h-2zM100,301h1v1h-1zM99,302h1v1h-1zM98,303h1v1h-1zM97,304h1v1h-1zM96,305h1v1h-1zM95,306h1v1h-1zM93,307h2v1h-2zM91,308h2v1h-2zM89,309h2v1h-2zM87,310h2v1h-2zM85,311h2v1h-2zM83,312h2v1h-2zM81,313h2v1h-2zM79,314h2v1h-2zM77,315h2v1h-2zM75,316h2v1h-2zM73,317h2v1h-2zM71,318h2v1h-2zM69,319h2v1h-2zM67,320h2v1h-2zM65,321h2v1h-2zM63,322h2v1h-2zM59,323h4v1h-4zM54,324h5v1h-5zM50,325h4v1h-4zM45,326h5v1h-5zM34,327h11v1h-11zM26,328h8v1h-8z"/>
<path fill="rgb(0,200,215)" d="M138,74h1v1h-1zM139,75h1v1h-1zM139,76h1v1h-1zM140,77h1v1h-1zM140,78h1v1h-1zM141,79h1v1h-1zM141,80h1v1h-1zM142,81h1v1h-1zM142,82h1v1h-1zM143,83h1v1h-1zM143,84h1v1h-1zM144,85h1v1h-1zM144,86h1v1h-1zM145,87h1v1h-1zM145,88h1v1h-1zM145,89h1v1h-1zM146,90h1v1h-1zM146,91h1v1h-1zM147,92h1v1h-1zM147,93h1v1h-1zM148,94h1v1h-1zM148,95h1v1h-1zM148,96h1v1h-1zM148,97h1v1h-1zM148,98h1v1h-1zM148,99h1v1h-1zM148,100h1v1h-1zM148,101h1v1h-1zM148,102h1v1h-1zM148,103h1v1h-1zM148,104h1v1h-1zM148,105h1v1h-1zM148,106h1v1h-1zM148,107h1v1h-1zM148,108h1v1h-1zM148,109h1v1h-1zM148,110h1v1h-1zM148,111h1v1h-1zM148,112h1v1h-1zM148,113h1v1h-1zM148,114h1v1h-1zM148,115h1v1h-1zM148,116h1v1h-1zM148,117h1v1h-1zM148,118h1v1h-1zM148,119h1v1h-1zM149,120h1v1h-1zM149,121h1v1h-1zM150,122h1v1h-1zM150,123h1v1h-1zM151,124h1v1h-1zM151,125h1v1h-1zM152,126h1v1h-1zM152,127h1v1h-1zM153,128h1v1h-1zM153,129h1v1h-1zM154,130h1v1h-1zM154,131h1v1h-1zM154,132h1v1h-1zM154,133h1v1h-1zM154,134h1v1h-1zM154,135h1v1h-1zM155,136h1v1h-1zM155,137h1v1h-1zM155,138h1v1h-1zM155,139h1v1h-1zM155,140h1v1h-1zM155,141h1v1h-1zM155,142h1v1h-1zM155,143h1v1h-1zM156,144h1v1h-1zM156,145h1v1h-1zM156,146h1v1h-1zM156,147h1v1h-1zM156,148h1v1h-1zM156,149h1v1h-1zM156,150h1v1h-1zM156,151h1v1h-1zM157,152h1v1h-1zM157,153h1v1h-1zM157,154h1v1h-1zM157,155h1v1h-1zM157,156h1v1h-1zM157,157h1v1h-1zM158,158h1v1h-1zM158,159h1v1h-1zM158,160h1v1h-1zM158,161h1v1h-1zM158,162h1v1h-1zM159,163h1v1h-1zM159,164h1v1h-1zM159,165h1v1h-1zM159,166h1v1h-1zM160,167h1v1h-1zM160,168h1v1h-1zM160,169h1v1h-1zM160,170h1v1h-1zM160,171h1v1h-1zM161,172h1v1h-1zM161,173h1v1h-1zM161,174h1v1h-1zM161,175h1v1h-1zM161,176h1v1h-1zM161,177h1v1h-1zM161,178h1v1h-1zM160,179h1v1h-1zM160,180h1v1h-1zM160,181h1v1h-1zM160,182h1v1h-1zM160,183h1v1h-1zM160,184h1v1h-1zM160,185h1v1h-1zM160,186h1v1h-1zM160,187h1v1h-1zM159,188h1v1h-1zM159,189h1v1h-1zM159,190h1v1h-1zM159,191h1v1h-1zM159,192h1v1h-1zM159,193h1v1h-1zM159,194h1v1h-1zM159,195h1v1h-1zM159,196h1v1h-1zM159,197h1v1h-1zM159,198h1v1h-1zM159,199h1v1h-1zM159,200h1v1h-1zM159,201h1v1h-1zM159,202h1v1h-1zM159,203h1v1h-1zM158,204h1v1h-1zM158,205h1v1h-1zM158,206h1v1h-1zM158,207h1v1h-1zM158,208h1v1h-1zM158,209h1v1h-1zM158,210h1v1h-1zM158,211h1v1h-1zM158,212h1v1h-1zM158,213h1v1h-1zM158,214h1v1h-1zM158,215h1v1h-1zM158,216h1v1h-1zM158,217h1v1h-1zM157,218h1v1h-1zM157,219h1v1h-1zM157,220h1v1h-1zM157,221h1v1h-1zM157,222h1v1h-1zM156,223h1v1h-1zM156,224h1v1h-1zM156,225h1v1h-1zM156,226h1v1h-1zM155,227h1v1h-1zM155,228h1v1h-1zM155,229h1v1h-1zM155,230h1v1h-1zM154,231h1v1h-1zM154,232h1v1h-1zM154,233h1v1h-1zM153,234h1v1h-1zM153,235h1v1h-1zM153,236h1v1h-1zM153,237h1v1h-1zM152,238h1v1h-1zM152,239h1v1h-1zM152,240h1v1h-1zM151,241h1v1h-1zM151,242h1v1h-1zM151,243h1v1h-1zM150,244h1v1h-1zM150,245h1v1h-1zM150,246h1v1h-1zM149,247h1v1h-1zM149,248h1v1h-1zM148,249h1v1h-1zM148,250h1v1h-1zM147,251h1v1h-1zM147,252h1v1h-1zM146,253h1v1h-1zM146,254h1v1h-1zM145,255h1v1h-1zM145,256h1v1h-1zM144,257h1v1h-1zM144,258h1v1h-1zM143,259h1v1h-1zM143,260h1v1h-1zM142,261h1v1h-1zM142,262h1v1h-1zM141,263h1v1h-1zM141,264h1v1h-1zM140,265h1v1h-1zM139,266h1v1h-1zM139,267h1v1h-1zM138,268h1v1h-1zM137,269h1v1h-1zM137,270h1v1h-1zM136,271h1v1h-1zM135,272h1v1h-1zM134,273h1v1h-1zM134,274h1v1h-1zM133,275h1v1h-1zM132,276h1v1h-1zM132,277h1v1h-1zM131,278h1v1h-1zM131,279h1v1h-1zM130,280h1v1h-1zM130,281h1v1h-1zM129,282h1v1h-1zM129,283h1v1h-1zM128,284h1v1h-1zM127,285h1v1h-1zM126,286h1v1h-1zM125,287h1v1h-1zM124,288h1v1h-1zM122,289h2v1h-2zM121,290h1v1h-1zM120,291h1v1h-1zM119,292h1v1h-1zM118,293h1v1h-1zM117,294h1v1h-1zM116,295h1v1h-1zM115,296h1v1h-1zM114,297h1v1h-1zM113,298h1v1h-1zM111,299h2v1h-2zM110,300h1v1h-1zM109,301h1v1h-1zM108,302h1v1h-1zM107,303h1v1h-1zM106,304h1v1h-1zM104,305h2v1h-2zM103,306h1v1h-1zM101,307h2v1h-2zM100,308h1v1h-1zM99,309h1v1h-1zM98,310h1v1h-1zM97,311h1v1h-1zM96,312h1v1h-1zM94,313h2v1h-2zM92,314h2v1h-2zM90,315h2v1h-2zM88,316h2v1h-2zM86,317h2v1h-2zM84,318h2v1h-2zM82,319h2v1h-2zM80,320h2v1h-2zM78,321h2v1h-2zM76,322h2v1h-2zM73,323h3v1h-3zM71,324h2v1h-2zM68,325h3v1h-3zM66,326h2v1h-2zM64,327h2v1h-2zM60,328h4v1h-4zM56,329h4v1h-4zM52,330h4v1h-4zM48,331h4v1h-4zM44,332h4v1h-4zM26,333h18v1h-18z"/>
<path fill="rgb(0,200,215)" d="M168,101h1v1h-1zM168,102h1v1h-1zM169,103h1v1h-1zM169,104h1v1h-1zM170,105h1v1h-1zM170,106h1v1h-1zM170,107h1v1h-1zM171,108h1v1h-1zM171,109h1v1h-1zM172,110h1v1h-1zM172,111h1v1h-1zM172,112h1v1h-1zM173,113h1v1h-1zM173,114h1v1h-1zM174,115h1v1h-1zM174,116h1v1h-1zM174,117h1v1h-1zM174,118h1v1h-1zM174,119h1v1h-1zM174,120h1v1h-1zM174,121h1v1h-1zM174,122h1v1h-1zM173,123h1v1h-1zM173,124h1v1h-1zM173,125h1v1h-1zM173,126h1v1h-1zM173,127h1v1h-1zM173,128h1v1h-1zM173,129h1v1h-1zM172,130h1v1h-1zM172,131h1v1h-1zM172,132h1v1h-1zM171,133h1v1h-1zM171,134h1v1h-1zM171,135h1v1h-1zM171,136h1v1h-1zM170,137h1v1h-1zM170,138h1v1h-1zM170,139h1v1h-1zM169,140h1v1h-1zM169,141h1v1h-1zM169,142h1v1h-1zM169,143h1v1h-1zM169,144h1v1h-1zM169,145h1v1h-1zM169,146h1v1h-1zM169,147h1v1h-1zM169,148h1v1h-1zM170,149h1v1h-1zM170,150h1v1h-1zM170,151h1v1h-1zM170,152h1v1h-1zM170,153h1v1h-1zM170,154h1v1h-1zM170,155h1v1h-1zM170,156h1v1h-1zM170,157h1v1h-1zM170,158h1v1h-1zM170,159h1v1h-1zM171,160h1v1h-1zM171,161h1v1h-1zM171,162h1v1h-1zM171,163h1v1h-1zM171,164h1v1h-1zM171,165h1v1h-1zM171,166h1v1h-1zM171,167h1v1h-1zM172,168h1v1h-1zM172,169h1v1h-1zM172,170h1v1h-1zM172,171h1v1h-1zM172,172h1v1h-1zM172,173h1v1h-1zM172,174h1v1h-1zM171,175h1v1h-1zM171,176h1v1h-1zM171,177h1v1h-1zM171,178h1v1h-1zM170,179h1v1h-1zM170,180h1v1h-1zM170,181h1v1h-1zM170,182h1v1h-1zM169,183h1v1h-1zM169,184h1v1h-1zM169,185h1v1h-1zM169,186h1v1h-1zM168,187h1v1h-1zM168,188h1v1h-1zM168,189h1v1h-1zM168,190h1v1h-1zM168,191h1v1h-1zM168,192h1v1h-1zM168,193h1v1h-1zM168,194h1v1h-1zM168,195h1v1h-1zM168,196h1v1h-1zM168,197h1v1h-1zM168,198h1v1h-1zM168,199h1v1h-1zM168,200h1v1h-1zM168,201h1v1h-1zM168,202h1v1h-1zM168,203h1v1h-1zM168,204h1v1h-1zM168,205h1v1h-1zM168,206h1v1h-1zM167,207h1v1h-1zM167,208h1v1h-1zM167,209h1v1h-1zM167,210h1v1h-1zM167,211h1v1h-1zM167,212h1v1h-1zM166,213h1v1h-1zM166,214h1v1h-1zM166,215h1v1h-1zM166,216h1v1h-1zM165,217h1v1h-1zM165,218h1v1h-1zM165,219h1v1h-1zM165,220h1v1h-1zM164,221h1v1h-1zM164,222h1v1h-1zM164,223h1v1h-1zM164,224h1v1h-1zM163,225h1v1h-1zM163,226h1v1h-1zM163,227h1v1h-1zM163,228h1v1h-1zM162,229h1v1h-1zM162,230h1v1h-1zM162,231h1v1h-1zM161,232h1v1h-1zM161,233h1v1h-1zM161,234h1v1h-1zM160,235h1v1h-1zM160,236h1v1h-1zM160,237h1v1h-1zM159,238h1v1h-1zM159,239h1v1h-1zM159,240h1v1h-1zM158,241h1v1h-1zM158,242h1v1h-1zM158,243h1v1h-1zM157,244h1v1h-1zM157,245h1v1h-1zM157,246h1v1h-1zM156,247h1v1h-1zM156,248h1v1h-1zM156,249h1v1h-1zM155,250h1v1h-1zM155,251h1v1h-1zM154,252h1v1h-1zM154,253h1v1h-1zM153,254h1v1h-1zM153,255h1v1h-1zM152,256h1v1h-1zM152,257h1v1h-1zM151,258h1v1h-1zM151,259h1v1h-1zM150,260h1v1h-1zM150,261h1v1h-1zM149,262h1v1h-1zM149,263h1v1h-1zM148,264h1v1h-1zM148,265h1v1h-1zM147,266h1v1h-1zM147,267h1v1h-1zM146,268h1v1h-1zM145,269h1v1h-1zM145,270h1v1h-1zM144,271h1v1h-1zM144,272h1v1h-1zM143,273h1v1h-1zM143,274h1v1h-1zM142,275h1v1h-1zM141,276h1v1h-1zM140,277h1v1h-1zM140,278h1v1h-1zM139,279h1v1h-1zM138,280h1v1h-1zM137,281h1v1h-1zM136,282h1v1h-1zM136,283h1v1h-1zM135,284h1v1h-1zM134,285h1v1h-1zM133,286h1v1h-1zM132,287h1v1h-1zM131,288h1v1h-1zM130,289h1v1h-1zM129,290h1v1h-1zM128,291h1v1h-1zM128,292h1v1h-1zM127,293h1v1h-1zM126,294h1v1h-1zM125,295h1v1h-1zM124,296h1v1h-1zM123,297h1v1h-1zM122,298h1v1h-1zM121,299h1v1h-1zM120,300h1v1h-1zM119,301h1v1h-1zM118,302h1v1h-1zM116,303h2v1h-2zM115,304h1v1h-1zM114,305h1v1h-1zM113,306h1v1h-1zM112,307h1v1h-1zM111,308h1v1h-1zM110,309h1v1h-1zM108,310h2v1h-2zM107,311h1v1h-1zM105,312h2v1h-2zM104,313h1v1h-1zM103,314h1v1h-1zM101,315h2v1h-2zM99,316h2v1h-2zM97,317h2v1h-2zM95,318h2v1h-2zM93,319h2v1h-2zM91,320h2v1h-2zM89,321h2v1h-2zM87,322h2v1h-2zM85,323h2v1h-2zM83,324h2v1h-2zM81,325h2v1h-2zM79,326h2v1h-2zM76,327h3v1h-3zM74,328h2v1h-2zM71,329h3v1h-3zM69,330h2v1h-2zM66,331h3v1h-3zM64,332h2v1h-2zM61,333h3v1h-3zM59,334h2v1h-2zM55,335h4v1h-4zM50,336h5v1h-5zM45,337h5v1h-5zM26,338h19v1h-19z"/>
<path fill="rgb(0,160,240)" d="M190,131h1v1h-1zM190,132h1v1h-1zM190,133h1v1h-1zM190,134h1v1h-1zM190,135h1v1h-1zM191,136h1v1h-1zM191,137h1v1h-1zM191,138h1v1h-1zM191,139h1v1h-1zM191,140h1v1h-1zM191,141h1v1h-1zM191,142h1v1h-1zM191,143h1v1h-1zM191,144h1v1h-1zM191,145h1v1h-1zM191,146h1v1h-1zM191,147h1v1h-1zM191,148h1v1h-1zM191,149h1v1h-1zM191,150h1v1h-1zM191,151h1v1h-1zM191,152h1v1h-1zM191,153h1v1h-1zM191,154h1v1h-1zM191,155h1v1h-1zM191,156h1v1h-1zM190,157h1v1h-1zM190,158h1v1h-1zM189,159h1v1h-1zM189,160h1v1h-1zM188,161h1v1h-1zM188,162h1v1h-1zM188,163h1v1h-1zM187,164h1v1h-1zM187,165h1v1h-1zM186,166h1v1h-1zM186,167h1v1h-1zM185,168h1v1h-1zM185,169h1v1h-1zM185,170h1v1h-1zM185,171h1v1h-1zM184,172h1v1h-1zM184,173h1v1h-1zM184,174h1v1h-1zM184,175h1v1h-1zM183,176h1v1h-1zM183,177h1v1h-1zM183,178h1v1h-1zM183,179h1v1h-1zM183,180h1v1h-1zM182,181h1v1h-1zM182,182h1v1h-1zM182,183h1v1h-1zM182,184h1v1h-1zM182,185h1v1h-1zM181,186h1v1h-1zM181,187h1v1h-1zM181,188h1v1h-1zM181,189h1v1h-1zM180,190h1v1h-1zM180,191h1v1h-1zM180,192h1v1h-1zM180,193h1v1h-1zM180,194h1v1h-1zM180,195h1v1h-1zM179,196h1v1h-1zM179,197h1v1h-1zM179,198h1v1h-1zM179,199h1v1h-1zM179,200h1v1h-1zM179,201h1v1h-1zM178,202h1v1h-1zM178,203h1v1h-1zM178,204h1v1h-1zM178,205h1v1h-1zM178,206h1v1h-1zM177,207h1v1h-1zM177,208h1v1h-1zM177,209h1v1h-1zM177,210h1v1h-1zM176,211h1v1h-1zM176,212h1v1h-1zM176,213h1v1h-1zM175,214h1v1h-1zM175,215h1v1h-1zM175,216h1v1h-1zM174,217h1v1h-1zM174,218h1v1h-1zM174,219h1v1h-1zM174,220h1v1h-1zM173,221h1v1h-1zM173,222h1v1h-1zM173,223h1v1h-1zM173,224h1v1h-1zM172,225h1v1h-1zM172,226h1v1h-1zM172,227h1v1h-1zM172,228h1v1h-1zM171,229h1v1h-1zM171,230h1v1h-1zM171,231h1v1h-1zM171,232h1v1h-1zM170,233h1v1h-1zM170,234h1v1h-1zM170,235h1v1h-1zM169,236h1v1h-1zM169,237h1v1h-1zM169,238h1v1h-1zM168,239h1v1h-1zM168,240h1v1h-1zM168,241h1v1h-1zM167,242h1v1h-1zM167,243h1v1h-1zM167,244h1v1h-1zM166,245h1v1h-1zM166,246h1v1h-1zM166,247h1v1h-1zM165,248h1v1h-1zM165,249h1v1h-1zM164,250h1v1h-1zM164,251h1v1h-1zM163,252h1v1h-1zM163,253h1v1h-1zM162,254h1v1h-1zM162,255h1v1h-1zM161,256h1v1h-1zM161,257h1v1h-1zM160,258h1v1h-1zM160,259h1v1h-1zM159,260h1v1h-1zM159,261h1v1h-1zM158,262h1v1h-1zM158,263h1v1h-1zM157,264h1v1h-1zM157,265h1v1h-1zM156,266h1v1h-1zM156,267h1v1h-1zM155,268h1v1h-1zM154,269h1v1h-1zM154,270h1v1h-1zM153,271h1v1h-1zM152,272h1v1h-1zM151,273h1v1h-1zM151,274h1v1h-1zM150,275h1v1h-1zM150,276h1v1h-1zM149,277h1v1h-1zM149,278h1v1h-1zM148,279h1v1h-1zM147,280h1v1h-1zM146,281h1v1h-1zM145,282h1v1h-1zM144,283h1v1h-1zM143,284h1v1h-1zM143,285h1v1h-1zM142,286h1v1h-1zM141,287h1v1h-1zM140,288h1v1h-1zM139,289h1v1h-1zM138,290h1v1h-1zM137,291h1v1h-1zM136,292h1v1h-1zM135,293h1v1h-1zM134,294h1v1h-1zM134,295h1v1h-1zM133,296h1v1h-1zM132,297h1v1h-1zM131,298h1v1h-1zM130,299h1v1h-1zM129,300h1v1h-1zM128,301h1v1h-1zM126,302h2v1h-2zM125,303h1v1h-1zM124,304h1v1h-1zM123,305h1v1h-1zM122,306h1v1h-1zM120,307h2v1h-2zM119,308h1v1h-1zM117,309h2v1h-2zM116,310h1v1h-1zM116,311h1v1h-1zM115,312h1v1h-1zM115,313h1v1h-1zM113,314h2v1h-2zM111,315h2v1h-2zM110,316h1v1h-1zM108,317h2v1h-2zM107,318h1v1h-1zM105,319h2v1h-2zM104,320h1v1h-1zM103,321h1v1h-1zM101,322h2v1h-2zM100,323h1v1h-1zM98,324h2v1h-2zM96,325h2v1h-2zM94,326h2v1h-2zM92,327h2v1h-2zM90,328h2v1h-2zM88,329h2v1h-2zM86,330h2v1h-2zM84,331h2v1h-2zM82,332h2v1h-2zM80,333h2v1h-2zM78,334h2v1h-2zM75,335h3v1h-3zM70,336h5v1h-5zM66,337h4v1h-4zM61,338h5v1h-5zM57,339h4v1h-4zM54,340h3v1h-3zM50,341h4v1h-4zM47,342h3v1h-3zM44,343h3v1h-3zM26,344h18v1h-18z"/>
<path fill="rgb(0,160,240)" d="M207,161h1v1h-1zM207,162h1v1h-1zM207,163h1v1h-1zM207,164h1v1h-1zM206,165h1v1h-1zM206,166h1v1h-1zM206,167h1v1h-1zM206,168h1v1h-1zM206,169h1v1h-1zM206,170h1v1h-1zM206,171h1v1h-1zM205,172h1v1h-1zM205,173h1v1h-1zM205,174h1v1h-1zM205,175h1v1h-1zM205,176h1v1h-1zM204,177h1v1h-1zM204,178h1v1h-1zM204,179h1v1h-1zM203,180h1v1h-1zM203,181h1v1h-1zM202,182h1v1h-1zM202,183h1v1h-1zM202,184h1v1h-1zM201,185h1v1h-1zM201,186h1v1h-1zM200,187h1v1h-1zM200,188h1v1h-1zM199,189h1v1h-1zM199,190h1v1h-1zM198,191h1v1h-1zM197,192h1v1h-1zM197,193h1v1h-1zM196,194h1v1h-1zM195,195h1v1h-1zM195,196h1v1h-1zM194,197h1v1h-1zM194,198h1v1h-1zM193,199h1v1h-1zM193,200h1v1h-1zM193,201h1v1h-1zM192,202h1v1h-1zM192,203h1v1h-1zM192,204h1v1h-1zM192,205h1v1h-1zM191,206h1v1h-1zM191,207h1v1h-1zM191,208h1v1h-1zM191,209h1v1h-1zM190,210h1v1h-1zM190,211h1v1h-1zM189,212h1v1h-1zM189,213h1v1h-1zM188,214h1v1h-1zM188,215h1v1h-1zM188,216h1v1h-1zM187,217h1v1h-1zM187,218h1v1h-1zM186,219h1v1h-1zM186,220h1v1h-1zM185,221h1v1h-1zM185,222h1v1h-1zM184,223h1v1h-1zM184,224h1v1h-1zM183,225h1v1h-1zM183,226h1v1h-1zM182,227h1v1h-1zM182,228h1v1h-1zM181,229h1v1h-1zM181,230h1v1h-1zM180,231h1v1h-1zM180,232h1v1h-1zM180,233h1v1h-1zM179,234h1v1h-1zM179,235h1v1h-1zM178,236h1v1h-1zM178,237h1v1h-1zM178,238h1v1h-1zM177,239h1v1h-1zM177,240h1v1h-1zM176,241h1v1h-1zM176,242h1v1h-1zM176,243h1v1h-1zM175,244h1v1h-1zM175,245h1v1h-1zM174,246h1v1h-1zM174,247h1v1h-1zM174,248h1v1h-1zM173,249h1v1h-1zM173,250h1v1h-1zM172,251h1v1h-1zM172,252h1v1h-1zM171,253h1v1h-1zM171,254h1v1h-1zM170,255h1v1h-1zM170,256h1v1h-1zM169,257h1v1h-1zM168,258h1v1h-1zM168,259h1v1h-1zM167,260h1v1h-1zM167,261h1v1h-1zM166,262h1v1h-1zM165,263h1v1h-1zM165,264h1v1h-1zM164,265h1v1h-1zM163,266h1v1h-1zM163,267h1v1h-1zM162,268h1v1h-1zM161,269h1v1h-1zM161,270h1v1h-1zM160,271h1v1h-1zM160,272h1v1h-1zM159,273h1v1h-1zM159,274h1v1h-1zM158,275h1v1h-1zM157,276h1v1h-1zM157,277h1v1h-1zM156,278h1v1h-1zM156,279h1v1h-1zM155,280h1v1h-1zM154,281h1v1h-1zM153,282h1v1h-1zM152,283h1v1h-1zM151,284h1v1h-1zM151,285h1v1h-1zM150,286h1v1h-1zM149,287h1v1h-1zM148,288h1v1h-1zM147,289h1v1h-1zM146,290h1v1h-1zM146,291h1v1h-1zM145,292h1v1h-1zM144,293h1v1h-1zM144,294h1v1h-1zM143,295h1v1h-1zM142,296h1v1h-1zM141,297h1v1h-1zM140,298h1v1h-1zM139,299h1v1h-1zM138,300h1v1h-1zM137,301h1v1h-1zM136,302h1v1h-1zM135,303h1v1h-1zM134,304h1v1h-1zM133,305h1v1h-1zM132,306h1v1h-1zM131,307h1v1h-1zM130,308h1v1h-1zM129,309h1v1h-1zM128,310h1v1h-1zM127,311h1v1h-1zM125,312h2v1h-2zM124,313h1v1h-1zM123,314h1v1h-1zM121,315h2v1h-2zM120,316h1v1h-1zM119,317h1v1h-1zM117,318h2v1h-2zM116,319h1v1h-1zM115,320h1v1h-1zM113,321h2v1h-2zM112,322h1v1h-1zM111,323h1v1h-1zM110,324h1v1h-1zM109,325h1v1h-1zM108,326h1v1h-1zM107,327h1v1h-1zM105,328h2v1h-2zM102,329h3v1h-3zM100,330h2v1h-2zM98,331h2v1h-2zM96,332h2v1h-2zM95,333h1v1h-1zM93,334h2v1h-2zM90,335h3v1h-3zM86,336h4v1h-4zM82,337h4v1h-4zM79,338h3v1h-3zM76,339h3v1h-3zM73,340h3v1h-3zM69,341h4v1h-4zM66,342h3v1h-3zM63,343h3v1h-3zM60,344h3v1h-3zM56,345h4v1h-4zM53,346h3v1h-3zM50,347h3v1h-3zM46,348h4v1h-4zM26,349h20v1h-20z"/>
<path fill="rgb(0,112,255)" d="M216,194h1v1h-1zM216,195h1v1h-1zM216,196h1v1h-1zM215,197h1v1h-1zM215,198h1v1h-1zM215,199h1v1h-1zM215,200h1v1h-1zM215,201h1v1h-1zM215,202h1v1h-1zM214,203h1v1h-1zM214,204h1v1h-1zM214,205h1v1h-1zM214,206h1v1h-1zM213,207h1v1h-1zM213,208h1v1h-1zM212,209h1v1h-1zM212,210h1v1h-1zM211,211h1v1h-1zM211,212h1v1h-1zM210,213h1v1h-1zM210,214h1v1h-1zM209,215h1v1h-1zM208,216h1v1h-1zM207,217h1v1h-1zM206,218h1v1h-1zM205,219h1v1h-1zM204,220h1v1h-1zM203,221h1v1h-1zM202,222h1v1h-1zM202,223h1v1h-1zM201,224h1v1h-1zM200,225h1v1h-1zM199,226h1v1h-1zM198,227h1v1h-1zM197,228h1v1h-1zM196,229h1v1h-1zM195,230h1v1h-1zM194,231h1v1h-1zM194,232h1v1h-1zM193,233h1v1h-1zM193,234h1v1h-1zM193,235h1v1h-1zM192,236h1v1h-1zM192,237h1v1h-1zM192,238h1v1h-1zM191,239h1v1h-1zM191,240h1v1h-1zM190,241h1v1h-1zM190,242h1v1h-1zM190,243h1v1h-1zM189,244h1v1h-1zM189,245h1v1h-1zM188,246h1v1h-1zM188,247h1v1h-1zM187,248h1v1h-1zM186,249h1v1h-1zM186,250h1v1h-1zM185,251h1v1h-1zM185,252h1v1h-1zM184,253h1v1h-1zM183,254h1v1h-1zM183,255h1v1h-1zM182,256h1v1h-1zM181,257h1v1h-1zM181,258h1v1h-1zM180,259h1v1h-1zM179,260h1v1h-1zM178,261h1v1h-1zM178,262h1v1h-1zM177,263h1v1h-1zM176,264h1v1h-1zM175,265h1v1h-1zM174,266h1v1h-1zM174,267h1v1h-1zM173,268h1v1h-1zM172,269h1v1h-1zM172,270h1v1h-1zM171,271h1v1h-1zM171,272h1v1h-1zM170,273h1v1h-1zM170,274h1v1h-1zM169,275h1v1h-1zM168,276h1v1h-1zM168,277h1v1h-1zM167,278h1v1h-1zM167,279h1v1h-1zM166,280h1v1h-1zM166,281h1v1h-1zM165,282h1v1h-1zM165,283h1v1h-1zM164,284h1v1h-1zM163,285h1v1h-1zM162,286h1v1h-1zM161,287h1v1h-1zM160,288h1v1h-1zM159,289h1v1h-1zM158,290h1v1h-1zM157,291h1v1h-1zM157,292h1v1h-1zM156,293h1v1h-1zM155,294h1v1h-1zM154,295h1v1h-1zM153,296h1v1h-1zM152,297h1v1h-1zM151,298h1v1h-1zM150,299h1v1h-1zM149,300h1v1h-1zM148,301h1v1h-1zM147,302h1v1h-1zM146,303h1v1h-1zM145,304h1v1h-1zM144,305h1v1h-1zM143,306h1v1h-1zM142,307h1v1h-1zM141,308h1v1h-1zM140,309h1v1h-1zM140,310h1v1h-1zM139,311h1v1h-1zM138,312h1v1h-1zM136,313h2v1h-2zM134,314h2v1h-2zM133,315h1v1h-1zM131,316h2v1h-2zM130,317h1v1h-1zM129,318h1v1h-1zM127,319h2v1h-2zM126,320h1v1h-1zM125,321h1v1h-1zM123,322h2v1h-2zM122,323h1v1h-1zM121,324h1v1h-1zM119,325h2v1h-2zM118,326h1v1h-1zM117,327h1v1h-1zM116,328h1v1h-1zM114,329h2v1h-2zM113,330h1v1h-1zM112,331h1v1h-1zM110,332h2v1h-2zM108,333h2v1h-2zM107,334h1v1h-1zM105,335h2v1h-2zM103,336h2v1h-2zM101,337h2v1h-2zM99,338h2v1h-2zM96,339h3v1h-3zM93,340h3v1h-3zM90,341h3v1h-3zM87,342h3v1h-3zM84,343h3v1h-3zM81,344h3v1h-3zM78,345h3v1h-3zM75,346h3v1h-3zM72,347h3v1h-3zM69,348h3v1h-3zM66,349h3v1h-3zM63,350h3v1h-3zM59,351h4v1h-4zM56,352h3v1h-3zM53,353h3v1h-3zM49,354h4v1h-4zM46,355h3v1h-3zM26,356h20v1h-20z"/>
<path fill="rgb(0,0,255)" d="M219,229h1v1h-1zM219,230h1v1h-1zM218,231h1v1h-1zM218,232h1v1h-1zM217,233h1v1h-1zM217,234h1v1h-1zM216,235h1v1h-1zM216,236h1v1h-1zM215,237h1v1h-1zM215,238h1v1h-1zM215,239h1v1h-1zM214,240h1v1h-1zM214,241h1v1h-1zM213,242h1v1h-1zM213,243h1v1h-1zM212,244h1v1h-1zM212,245h1v1h-1zM211,246h1v1h-1zM211,247h1v1h-1zM210,248h1v1h-1zM210,249h1v1h-1zM209,250h1v1h-1zM208,251h1v1h-1zM207,252h1v1h-1zM205,253h2v1h-2zM204,254h1v1h-1zM203,255h1v1h-1zM202,256h1v1h-1zM201,257h1v1h-1zM200,258h1v1h-1zM199,259h1v1h-1zM197,260h2v1h-2zM195,261h2v1h-2zM193,262h2v1h-2zM191,263h2v1h-2zM191,264h1v1h-1zM190,265h1v1h-1zM190,266h1v1h-1zM189,267h1v1h-1zM189,268h1v1h-1zM188,269h1v1h-1zM187,270h1v1h-1zM186,271h1v1h-1zM186,272h1v1h-1zM185,273h1v1h-1zM184,274h1v1h-1zM183,275h1v1h-1zM182,276h1v1h-1zM182,277h1v1h-1zM181,278h1v1h-1zM180,279h1v1h-1zM179,280h1v1h-1zM179,281h1v1h-1zM178,282h1v1h-1zM177,283h1v1h-1zM176,284h1v1h-1zM176,285h1v1h-1zM175,286h1v1h-1zM174,287h1v1h-1zM173,288h1v1h-1zM172,289h1v1h-1zM171,290h1v1h-1zM170,291h1v1h-1zM169,292h1v1h-1zM168,293h1v1h-1zM167,294h1v1h-1zM166,295h1v1h-1zM165,296h1v1h-1zM164,297h1v1h-1zM163,298h1v1h-1zM162,299h1v1h-1zM161,300h1v1h-1zM160,301h1v1h-1zM159,302h1v1h-1zM158,303h1v1h-1zM157,304h1v1h-1zM156,305h1v1h-1zM155,306h1v1h-1zM154,307h1v1h-1zM154,308h1v1h-1zM153,309h1v1h-1zM152,310h1v1h-1zM151,311h1v1h-1zM150,312h1v1h-1zM149,313h1v1h-1zM148,314h1v1h-1zM146,315h2v1h-2zM145,316h1v1h-1zM144,317h1v1h-1zM143,318h1v1h-1zM142,319h1v1h-1zM140,320h2v1h-2zM139,321h1v1h-1zM137,322h2v1h-2zM135,323h2v1h-2zM134,324h1v1h-1zM132,325h2v1h-2zM131,326h1v1h-1zM129,327h2v1h-2zM128,328h1v1h-1zM127,329h1v1h-1zM125,330h2v1h-2zM124,331h1v1h-1zM123,332h1v1h-1zM121,333h2v1h-2zM120,334h1v1h-1zM119,335h1v1h-1zM118,336h1v1h-1zM116,337h2v1h-2zM115,338h1v1h-1zM114,339h1v1h-1zM113,340h1v1h-1zM111,341h2v1h-2zM109,342h2v1h-2zM106,343h3v1h-3zM104,344h2v1h-2zM102,345h2v1h-2zM99,346h3v1h-3zM97,347h2v1h-2zM95,348h2v1h-2zM93,349h2v1h-2zM90,350h3v1h-3zM88,351h2v1h-2zM86,352h2v1h-2zM84,353h2v1h-2zM80,354h4v1h-4zM74,355h6v1h-6zM68,356h6v1h-6zM64,357h4v1h-4zM60,358h4v1h-4zM56,359h4v1h-4zM52,360h4v1h-4zM48,361h4v1h-4zM26,362h22v1h-22z"/>
<path fill="rgb(0,0,255)" d="M216,264h1v1h-1zM215,265h1v1h-1zM214,266h1v1h-1zM214,267h1v1h-1zM213,268h1v1h-1zM212,269h1v1h-1zM212,270h1v1h-1zM211,271h1v1h-1zM211,272h1v1h-1zM210,273h1v1h-1zM210,274h1v1h-1zM209,275h1v1h-1zM208,276h1v1h-1zM208,277h1v1h-1zM207,278h1v1h-1zM207,279h1v1h-1zM206,280h1v1h-1zM206,281h1v1h-1zM205,282h1v1h-1zM205,283h1v1h-1zM204,284h1v1h-1zM202,285h2v1h-2zM200,286h2v1h-2zM199,287h1v1h-1zM197,288h2v1h-2zM196,289h1v1h-1zM194,290h2v1h-2zM192,291h2v1h-2zM191,292h1v1h-1zM189,293h2v1h-2zM187,294h2v1h-2zM186,295h1v1h-1zM184,296h2v1h-2zM182,297h2v1h-2zM181,298h1v1h-1zM180,299h1v1h-1zM179,300h1v1h-1zM178,301h1v1h-1zM176,302h2v1h-2zM175,303h1v1h-1zM174,304h1v1h-1zM173,305h1v1h-1zM172,306h1v1h-1zM171,307h1v1h-1zM170,308h1v1h-1zM169,309h1v1h-1zM167,310h2v1h-2zM166,311h1v1h-1zM165,312h1v1h-1zM164,313h1v1h-1zM163,314h1v1h-1zM162,315h1v1h-1zM161,316h1v1h-1zM160,317h1v1h-1zM158,318h2v1h-2zM157,319h1v1h-1zM156,320h1v1h-1zM155,321h1v1h-1zM153,322h2v1h-2zM152,323h1v1h-1zM151,324h1v1h-1zM149,325h2v1h-2zM148,326h1v1h-1zM146,327h2v1h-2zM145,328h1v1h-1zM143,329h2v1h-2zM142,330h1v1h-1zM140,331h2v1h-2zM139,332h1v1h-1zM137,333h2v1h-2zM136,334h1v1h-1zM134,335h2v1h-2zM133,336h1v1h-1zM132,337h1v1h-1zM130,338h2v1h-2zM129,339h1v1h-1zM128,340h1v1h-1zM126,341h2v1h-2zM125,342h1v1h-1zM123,343h2v1h-2zM121,344h2v1h-2zM120,345h1v1h-1zM118,346h2v1h-2zM117,347h1v1h-1zM115,348h2v1h-2zM113,349h2v1h-2zM111,350h2v1h-2zM109,351h2v1h-2zM106,352h3v1h-3zM104,353h2v1h-2zM102,354h2v1h-2zM99,355h3v1h-3zM97,356h2v1h-2zM94,357h3v1h-3zM91,358h3v1h-3zM89,359h2v1h-2zM86,360h3v1h-3zM84,361h2v1h-2zM80,362h4v1h-4zM76,363h4v1h-4zM71,364h5v1h-5zM67,365h4v1h-4zM62,366h5v1h-5zM58,367h4v1h-4zM53,368h5v1h-5zM49,369h4v1h-4zM26,370h23v1h-23z"/>
<path fill="rgb(0,0,255)" d="M203,306h2v1h-2zM201,307h2v1h-2zM200,308h1v1h-1zM199,309h1v1h-1zM198,310h1v1h-1zM197,311h1v1h-1zM196,312h1v1h-1zM195,313h1v1h-1zM194,314h1v1h-1zM193,315h1v1h-1zM192,316h1v1h-1zM191,317h1v1h-1zM190,318h1v1h-1zM188,319h2v1h-2zM187,320h1v1h-1zM186,321h1v1h-1zM184,322h2v1h-2zM183,323h1v1h-1zM181,324h2v1h-2zM179,325h2v1h-2zM177,326h2v1h-2zM175,327h2v1h-2zM173,328h2v1h-2zM171,329h2v1h-2zM169,330h2v1h-2zM167,331h2v1h-2zM165,332h2v1h-2zM163,333h2v1h-2zM161,334h2v1h-2zM159,335h2v1h-2zM157,336h2v1h-2zM155,337h2v1h-2zM153,338h2v1h-2zM151,339h2v1h-2zM150,340h1v1h-1zM148,341h2v1h-2zM147,342h1v1h-1zM145,343h2v1h-2zM144,344h1v1h-1zM142,345h2v1h-2zM141,346h1v1h-1zM139,347h2v1h-2zM138,348h1v1h-1zM136,349h2v1h-2zM134,350h2v1h-2zM133,351h1v1h-1zM131,352h2v1h-2zM130,353h1v1h-1zM128,354h2v1h-2zM126,355h2v1h-2zM124,356h2v1h-2zM122,357h2v1h-2zM119,358h3v1h-3zM116,359h3v1h-3zM114,360h2v1h-2zM111,361h3v1h-3zM108,362h3v1h-3zM105,363h3v1h-3zM102,364h3v1h-3zM99,365h3v1h-3zM96,366h3v1h-3zM93,367h3v1h-3zM90,368h3v1h-3zM87,369h3v1h-3zM84,370h3v1h-3zM79,371h5v1h-5zM73,372h6v1h-6zM67,373h6v1h-6zM63,374h4v1h-4zM59,375h4v1h-4zM55,376h4v1h-4zM52,377h3v1h-3zM26,378h3v1h-3zM48,378h4v1h-4zM29,379h19v1h-19z"/>
<path fill="rgb(0,0,255)" d="M179,347h1v1h-1zM177,348h2v1h-2zM175,349h2v1h-2zM173,350h2v1h-2zM171,351h2v1h-2zM170,352h1v1h-1zM168,353h2v1h-2zM166,354h2v1h-2zM165,355h1v1h-1zM163,356h2v1h-2zM161,357h2v1h-2zM160,358h1v1h-1zM158,359h2v1h-2zM156,360h2v1h-2zM155,361h1v1h-1zM153,362h2v1h-2zM151,363h2v1h-2zM149,364h2v1h-2zM146,365h3v1h-3zM143,366h3v1h-3zM140,367h3v1h-3zM137,368h3v1h-3zM134,369h3v1h-3zM130,370h4v1h-4zM127,371h3v1h-3zM124,372h3v1h-3zM121,373h3v1h-3zM117,374h4v1h-4zM114,375h3v1h-3zM109,376h5v1h-5zM103,377h6v1h-6zM99,378h4v1h-4zM96,379h3v1h-3zM93,380h3v1h-3zM90,381h3v1h-3zM87,382h3v1h-3zM84,383h3v1h-3zM80,384h4v1h-4zM76,385h4v1h-4zM71,386h5v1h-5zM67,387h4v1h-4zM62,388h5v1h-5zM26,389h3v1h-3zM57,389h5v1h-5zM29,390h8v1h-8zM52,390h5v1h-5zM37,391h15v1h-15z"/>
<path fill="#fff" d="M25,38h11v1h-11zM25,39h1v1h-1zM36,39h13v1h-13zM25,40h1v1h-1zM49,40h7v1h-7zM25,41h1v1h-1zM56,41h7v1h-7zM25,42h1v1h-1zM63,42h5v1h-5zM25,43h1v1h-1zM68,43h4v1h-4zM25,44h1v1h-1zM72,44h4v1h-4zM25,45h1v1h-1zM76,45h4v1h-4zM25,46h1v1h-1zM80,46h4v1h-4zM25,47h1v1h-1zM84,47h3v1h-3zM25,48h1v1h-1zM87,48h2v1h-2zM25,49h1v1h-1zM89,49h2v1h-2zM25,50h1v1h-1zM91,50h3v1h-3zM25,51h1v1h-1zM94,51h2v1h-2zM25,52h1v1h-1zM96,52h3v1h-3zM25,53h1v1h-1zM99,53h2v1h-2zM25,54h1v1h-1zM101,54h2v1h-2zM25,55h1v1h-1zM103,55h3v1h-3zM25,56h1v1h-1zM106,56h2v1h-2zM25,57h1v1h-1zM108,57h2v1h-2zM25,58h1v1h-1zM110,58h2v1h-2zM25,59h1v1h-1zM112,59h2v1h-2zM25,60h1v1h-1zM114,60h2v1h-2zM25,61h1v1h-1zM116,61h2v1h-2zM25,62h1v1h-1zM118,62h2v1h-2zM25,63h1v1h-1zM120,63h2v1h-2zM25,64h1v1h-1zM122,64h1v1h-1zM25,65h1v1h-1zM123,65h2v1h-2zM25,66h1v1h-1zM125,66h2v1h-2zM25,67h1v1h-1zM127,67h2v1h-2zM25,68h1v1h-1zM129,68h2v1h-2zM25,69h1v1h-1zM131,69h1v1h-1zM25,70h1v1h-1zM132,70h2v1h-2zM25,71h1v1h-1zM134,71h2v1h-2zM25,72h1v1h-1zM136,72h2v1h-2zM25,73h1v1h-1zM138,73h2v1h-2zM25,74h1v1h-1zM140,74h1v1h-1zM25,75h1v1h-1zM141,75h1v1h-1zM25,76h1v1h-1zM142,76h1v1h-1zM25,77h1v1h-1zM143,77h2v1h-2zM25,78h1v1h-1zM145,78h1v1h-1zM25,79h1v1h-1zM146,79h1v1h-1zM25,80h1v1h-1zM147,80h1v1h-1zM25,81h1v1h-1zM148,81h1v1h-1zM25,82h1v1h-1zM149,82h1v1h-1zM25,83h1v1h-1zM150,83h1v1h-1zM25,84h1v1h-1zM151,84h2v1h-2zM25,85h1v1h-1zM153,85h1v1h-1zM25,86h1v1h-1zM154,86h1v1h-1zM25,87h1v1h-1zM155,87h1v1h-1zM25,88h1v1h-1zM156,88h1v1h-1zM25,89h1v1h-1zM157,89h1v1h-1zM25,90h1v1h-1zM158,90h1v1h-1zM25,91h1v1h-1zM159,91h1v1h-1zM25,92h1v1h-1zM160,92h1v1h-1zM25,93h1v1h-1zM161,93h1v1h-1zM25,94h1v1h-1zM162,94h2v1h-2zM25,95h1v1h-1zM164,95h1v1h-1zM25,96h1v1h-1zM165,96h1v1h-1zM25,97h1v1h-1zM166,97h1v1h-1zM25,98h1v1h-1zM167,98h1v1h-1zM25,99h1v1h-1zM168,99h1v1h-1zM25,100h1v1h-1zM169,100h1v1h-1zM25,101h1v1h-1zM170,101h1v1h-1zM25,102h1v1h-1zM171,102h1v1h-1zM25,103h1v1h-1zM172,103h1v1h-1zM25,104h1v1h-1zM172,104h1v1h-1zM25,105h1v1h-1zM173,105h1v1h-1zM25,106h1v1h-1zM174,106h1v1h-1zM25,107h1v1h-1zM175,107h1v1h-1zM25,108h1v1h-1zM176,108h1v1h-1zM25,109h1v1h-1zM176,109h1v1h-1zM25,110h1v1h-1zM177,110h1v1h-1zM25,111h1v1h-1zM178,111h1v1h-1zM25,112h1v1h-1zM179,112h1v1h-1zM25,113h1v1h-1zM180,113h1v1h-1zM25,114h1v1h-1zM181,114h1v1h-1zM25,115h1v1h-1zM181,115h1v1h-1zM25,116h1v1h-1zM182,116h1v1h-1zM25,117h1v1h-1zM183,117h1v1h-1zM25,118h1v1h-1zM184,118h1v1h-1zM25,119h1v1h-1zM184,119h1v1h-1zM25,120h1v1h-1zM185,120h1v1h-1zM25,121h1v1h-1zM186,121h1v1h-1zM25,122h1v1h-1zM186,122h1v1h-1zM25,123h1v1h-1zM187,123h1v1h-1zM25,124h1v1h-1zM188,124h1v1h-1zM25,125h1v1h-1zM188,125h1v1h-1zM25,126h1v1h-1zM189,126h1v1h-1zM25,127h1v1h-1zM189,127h1v1h-1zM25,128h1v1h-1zM190,128h1v1h-1zM25,129h1v1h-1zM191,129h1v1h-1zM25,130h1v1h-1zM191,130h1v1h-1zM25,131h1v1h-1zM192,131h1v1h-1zM25,132h1v1h-1zM193,132h1v1h-1zM25,133h1v1h-1zM193,133h1v1h-1zM25,134h1v1h-1zM194,134h1v1h-1zM25,135h1v1h-1zM195,135h1v1h-1zM25,136h1v1h-1zM195,136h1v1h-1zM25,137h1v1h-1zM196,137h1v1h-1zM25,138h1v1h-1zM196,138h1v1h-1zM25,139h1v1h-1zM197,139h1v1h-1zM25,140h1v1h-1zM197,140h1v1h-1zM25,141h1v1h-1zM198,141h1v1h-1zM25,142h1v1h-1zM198,142h1v1h-1zM25,143h1v1h-1zM199,143h1v1h-1zM25,144h1v1h-1zM199,144h1v1h-1zM25,145h1v1h-1zM200,145h1v1h-1zM25,146h1v1h-1zM200,146h1v1h-1zM25,147h1v1h-1zM201,147h1v1h-1zM25,148h1v1h-1zM201,148h1v1h-1zM25,149h1v1h-1zM202,149h1v1h-1zM25,150h1v1h-1zM202,150h1v1h-1zM25,151h1v1h-1zM203,151h1v1h-1zM25,152h1v1h-1zM203,152h1v1h-1zM25,153h1v1h-1zM204,153h1v1h-1zM25,154h1v1h-1zM204,154h1v1h-1zM25,155h1v1h-1zM204,155h1v1h-1zM25,156h1v1h-1zM205,156h1v1h-1zM25,157h1v1h-1zM205,157h1v1h-1zM25,158h1v1h-1zM206,158h1v1h-1zM25,159h1v1h-1zM206,159h1v1h-1zM25,160h1v1h-1zM206,160h1v1h-1zM25,161h1v1h-1zM207,161h1v1h-1zM25,162h1v1h-1zM207,162h1v1h-1zM25,163h1v1h-1zM207,163h1v1h-1zM25,164h1v1h-1zM208,164h1v1h-1zM25,165h1v1h-1zM208,165h1v1h-1zM25,166h1v1h-1zM209,166h1v1h-1zM25,167h1v1h-1zM209,167h1v1h-1zM25,168h1v1h-1zM209,168h1v1h-1zM25,169h1v1h-1zM210,169h1v1h-1zM25,170h1v1h-1zM210,170h1v1h-1zM25,171h1v1h-1zM210,171h1v1h-1zM25,172h1v1h-1zM211,172h1v1h-1zM25,173h1v1h-1zM211,173h1v1h-1zM25,174h1v1h-1zM211,174h1v1h-1zM25,175h1v1h-1zM212,175h1v1h-1zM25,176h1v1h-1zM212,176h1v1h-1zM25,177h1v1h-1zM212,177h1v1h-1zM25,178h1v1h-1zM213,178h1v1h-1zM25,179h1v1h-1zM213,179h1v1h-1zM25,180h1v1h-1zM213,180h1v1h-1zM25,181h1v1h-1zM213,181h1v1h-1zM25,182h1v1h-1zM214,182h1v1h-1zM25,183h1v1h-1zM214,183h1v1h-1zM25,184h1v1h-1zM214,184h1v1h-1zM25,185h1v1h-1zM215,185h1v1h-1zM25,186h1v1h-1zM215,186h1v1h-1zM25,187h1v1h-1zM215,187h1v1h-1zM25,188h1v1h-1zM216,188h1v1h-1zM25,189h1v1h-1zM216,189h1v1h-1zM25,190h1v1h-1zM216,190h1v1h-1zM25,191h1v1h-1zM216,191h1v1h-1zM25,192h1v1h-1zM216,192h1v1h-1zM25,193h1v1h-1zM217,193h1v1h-1zM25,194h1v1h-1zM217,194h1v1h-1zM25,195h1v1h-1zM217,195h1v1h-1zM25,196h1v1h-1zM217,196h1v1h-1zM25,197h1v1h-1zM217,197h1v1h-1zM25,198h1v1h-1zM217,198h1v1h-1zM25,199h1v1h-1zM217,199h1v1h-1zM25,200h1v1h-1zM218,200h1v1h-1zM25,201h1v1h-1zM218,201h1v1h-1zM25,202h1v1h-1zM218,202h1v1h-1zM25,203h1v1h-1zM218,203h1v1h-1zM25,204h1v1h-1zM218,204h1v1h-1zM25,205h1v1h-1zM218,205h1v1h-1zM25,206h1v1h-1zM219,206h1v1h-1zM25,207h1v1h-1zM219,207h1v1h-1zM25,208h1v1h-1zM219,208h1v1h-1zM25,209h1v1h-1zM219,209h1v1h-1zM25,210h1v1h-1zM219,210h1v1h-1zM25,211h1v1h-1zM219,211h1v1h-1zM25,212h1v1h-1zM219,212h1v1h-1zM25,213h1v1h-1zM219,213h1v1h-1zM25,214h1v1h-1zM219,214h1v1h-1zM25,215h1v1h-1zM219,215h1v1h-1zM25,216h1v1h-1zM219,216h1v1h-1zM25,217h1v1h-1zM219,217h1v1h-1zM25,218h1v1h-1zM219,218h1v1h-1zM25,219h1v1h-1zM219,219h1v1h-1zM25,220h1v1h-1zM220,220h1v1h-1zM25,221h1v1h-1zM220,221h1v1h-1zM25,222h1v1h-1zM220,222h1v1h-1zM25,223h1v1h-1zM220,223h1v1h-1zM25,224h1v1h-1zM220,224h1v1h-1zM25,225h1v1h-1zM220,225h1v1h-1zM25,226h1v1h-1zM220,226h1v1h-1zM25,227h1v1h-1zM220,227h1v1h-1zM25,228h1v1h-1zM220,228h1v1h-1zM25,229h1v1h-1zM220,229h1v1h-1zM25,230h1v1h-1zM220,230h1v1h-1zM25,231h1v1h-1zM220,231h1v1h-1zM25,232h1v1h-1zM220,232h1v1h-1zM25,233h1v1h-1zM220,233h1v1h-1zM25,234h1v1h-1zM220,234h1v1h-1zM25,235h1v1h-1zM220,235h1v1h-1zM25,236h1v1h-1zM220,236h1v1h-1zM25,237h1v1h-1zM220,237h1v1h-1zM25,238h1v1h-1zM220,238h1v1h-1zM25,239h1v1h-1zM220,239h1v1h-1zM25,240h1v1h-1zM219,240h1v1h-1zM25,241h1v1h-1zM219,241h1v1h-1zM25,242h1v1h-1zM219,242h1v1h-1zM25,243h1v1h-1zM219,243h1v1h-1zM25,244h1v1h-1zM219,244h1v1h-1zM25,245h1v1h-1zM219,245h1v1h-1zM25,246h1v1h-1zM219,246h1v1h-1zM25,247h1v1h-1zM219,247h1v1h-1zM25,248h1v1h-1zM219,248h1v1h-1zM25,249h1v1h-1zM219,249h1v1h-1zM25,250h1v1h-1zM219,250h1v1h-1zM25,251h1v1h-1zM219,251h1v1h-1zM25,252h1v1h-1zM219,252h1v1h-1zM25,253h1v1h-1zM218,253h1v1h-1zM25,254h1v1h-1zM218,254h1v1h-1zM25,255h1v1h-1zM218,255h1v1h-1zM25,256h1v1h-1zM218,256h1v1h-1zM25,257h1v1h-1zM218,257h1v1h-1zM25,258h1v1h-1zM218,258h1v1h-1zM25,259h1v1h-1zM218,259h1v1h-1zM25,260h1v1h-1zM217,260h1v1h-1zM25,261h1v1h-1zM217,261h1v1h-1zM25,262h1v1h-1zM217,262h1v1h-1zM25,263h1v1h-1zM217,263h1v1h-1zM25,264h1v1h-1zM217,264h1v1h-1zM25,265h1v1h-1zM217,265h1v1h-1zM25,266h1v1h-1zM216,266h1v1h-1zM25,267h1v1h-1zM216,267h1v1h-1zM25,268h1v1h-1zM216,268h1v1h-1zM25,269h1v1h-1zM216,269h1v1h-1zM25,270h1v1h-1zM216,270h1v1h-1zM25,271h1v1h-1zM215,271h1v1h-1zM25,272h1v1h-1zM215,272h1v1h-1zM25,273h1v1h-1zM215,273h1v1h-1zM25,274h1v1h-1zM214,274h1v1h-1zM25,275h1v1h-1zM214,275h1v1h-1zM25,276h1v1h-1zM214,276h1v1h-1zM25,277h1v1h-1zM213,277h1v1h-1zM25,278h1v1h-1zM213,278h1v1h-1zM25,279h1v1h-1zM213,279h1v1h-1zM25,280h1v1h-1zM213,280h1v1h-1zM25,281h1v1h-1zM212,281h1v1h-1zM25,282h1v1h-1zM212,282h1v1h-1zM25,283h1v1h-1zM212,283h1v1h-1zM25,284h1v1h-1zM211,284h1v1h-1zM25,285h1v1h-1zM211,285h1v1h-1zM25,286h1v1h-1zM211,286h1v1h-1zM25,287h1v1h-1zM210,287h1v1h-1zM25,288h1v1h-1zM210,288h1v1h-1zM25,289h1v1h-1zM210,289h1v1h-1zM25,290h1v1h-1zM209,290h1v1h-1zM25,291h1v1h-1zM209,291h1v1h-1zM25,292h1v1h-1zM209,292h1v1h-1zM25,293h1v1h-1zM208,293h1v1h-1zM25,294h1v1h-1zM208,294h1v1h-1zM25,295h1v1h-1zM207,295h1v1h-1zM25,296h1v1h-1zM207,296h1v1h-1zM25,297h1v1h-1zM207,297h1v1h-1zM25,298h1v1h-1zM206,298h1v1h-1zM25,299h1v1h-1zM206,299h1v1h-1zM25,300h1v1h-1zM206,300h1v1h-1zM25,301h1v1h-1zM205,301h1v1h-1zM25,302h1v1h-1zM205,302h1v1h-1zM25,303h1v1h-1zM204,303h1v1h-1zM25,304h1v1h-1zM204,304h1v1h-1zM25,305h1v1h-1zM204,305h1v1h-1zM25,306h1v1h-1zM203,306h1v1h-1zM25,307h1v1h-1zM203,307h1v1h-1zM25,308h1v1h-1zM202,308h1v1h-1zM25,309h1v1h-1zM202,309h1v1h-1zM25,310h1v1h-1zM201,310h1v1h-1zM25,311h1v1h-1zM201,311h1v1h-1zM25,312h1v1h-1zM200,312h1v1h-1zM25,313h1v1h-1zM200,313h1v1h-1zM25,314h1v1h-1zM199,314h1v1h-1zM25,315h1v1h-1zM199,315h1v1h-1zM25,316h1v1h-1zM198,316h1v1h-1zM25,317h1v1h-1zM198,317h1v1h-1zM25,318h1v1h-1zM197,318h1v1h-1zM25,319h1v1h-1zM197,319h1v1h-1zM25,320h1v1h-1zM196,320h1v1h-1zM25,321h1v1h-1zM196,321h1v1h-1zM25,322h1v1h-1zM195,322h1v1h-1zM25,323h1v1h-1zM195,323h1v1h-1zM25,324h1v1h-1zM194,324h1v1h-1zM25,325h1v1h-1zM193,325h1v1h-1zM25,326h1v1h-1zM193,326h1v1h-1zM25,327h1v1h-1zM192,327h1v1h-1zM25,328h1v1h-1zM191,328h1v1h-1zM25,329h1v1h-1zM191,329h1v1h-1zM25,330h1v1h-1zM190,330h1v1h-1zM25,331h1v1h-1zM189,331h1v1h-1zM25,332h1v1h-1zM189,332h1v1h-1zM25,333h1v1h-1zM188,333h1v1h-1zM25,334h1v1h-1zM188,334h1v1h-1zM25,335h1v1h-1zM187,335h1v1h-1zM25,336h1v1h-1zM186,336h1v1h-1zM25,337h1v1h-1zM186,337h1v1h-1zM25,338h1v1h-1zM185,338h1v1h-1zM25,339h1v1h-1zM184,339h1v1h-1zM25,340h1v1h-1zM184,340h1v1h-1zM25,341h1v1h-1zM183,341h1v1h-1zM25,342h1v1h-1zM182,342h1v1h-1zM25,343h1v1h-1zM181,343h1v1h-1zM25,344h1v1h-1zM181,344h1v1h-1zM25,345h1v1h-1zM180,345h1v1h-1zM25,346h1v1h-1zM179,346h1v1h-1zM25,347h1v1h-1zM178,347h1v1h-1zM25,348h1v1h-1zM177,348h1v1h-1zM25,349h1v1h-1zM177,349h1v1h-1zM25,350h1v1h-1zM176,350h1v1h-1zM25,351h1v1h-1zM175,351h1v1h-1zM25,352h1v1h-1zM174,352h1v1h-1zM25,353h1v1h-1zM173,353h1v1h-1zM25,354h1v1h-1zM172,354h1v1h-1zM25,355h1v1h-1zM172,355h1v1h-1zM25,356h1v1h-1zM171,356h1v1h-1zM25,357h1v1h-1zM170,357h1v1h-1zM25,358h1v1h-1zM169,358h1v1h-1zM25,359h1v1h-1zM168,359h1v1h-1zM25,360h1v1h-1zM167,360h1v1h-1zM25,361h1v1h-1zM166,361h1v1h-1zM25,362h1v1h-1zM165,362h1v1h-1zM25,363h1v1h-1zM164,363h1v1h-1zM25,364h1v1h-1zM162,364h2v1h-2zM25,365h1v1h-1zM161,365h1v1h-1zM25,366h1v1h-1zM160,366h1v1h-1zM25,367h1v1h-1zM159,367h1v1h-1zM25,368h1v1h-1zM158,368h1v1h-1zM25,369h1v1h-1zM157,369h1v1h-1zM25,370h1v1h-1zM156,370h1v1h-1zM25,371h1v1h-1zM155,371h1v1h-1zM25,372h1v1h-1zM154,372h1v1h-1zM25,373h1v1h-1zM153,373h1v1h-1zM25,374h1v1h-1zM151,374h2v1h-2zM25,375h1v1h-1zM150,375h1v1h-1zM25,376h1v1h-1zM149,376h1v1h-1zM25,377h1v1h-1zM148,377h1v1h-1zM25,378h1v1h-1zM147,378h1v1h-1zM25,379h1v1h-1zM146,379h1v1h-1zM25,380h1v1h-1zM145,380h1v1h-1zM25,381h1v1h-1zM143,381h2v1h-2zM25,382h1v1h-1zM142,382h1v1h-1zM25,383h1v1h-1zM141,383h1v1h-1zM25,384h1v1h-1zM140,384h1v1h-1zM25,385h1v1h-1zM138,385h2v1h-2zM25,386h1v1h-1zM136,386h2v1h-2zM25,387h1v1h-1zM134,387h2v1h-2zM25,388h1v1h-1zM132,388h2v1h-2zM25,389h1v1h-1zM131,389h1v1h-1zM25,390h1v1h-1zM129,390h2v1h-2zM25,391h1v1h-1zM127,391h2v1h-2zM25,392h1v1h-1zM125,392h2v1h-2zM25,393h1v1h-1zM123,393h2v1h-2zM25,394h1v1h-1zM121,394h2v1h-2zM25,395h1v1h-1zM119,395h2v1h-2zM25,396h1v1h-1zM117,396h2v1h-2zM25,397h1v1h-1zM115,397h2v1h-2zM25,398h1v1h-1zM113,398h2v1h-2zM25,399h1v1h-1zM111,399h2v1h-2zM25,400h1v1h-1zM109,400h2v1h-2zM25,401h1v1h-1zM107,401h2v1h-2zM25,402h1v1h-1zM105,402h2v1h-2zM25,403h1v1h-1zM103,403h2v1h-2zM25,404h1v1h-1zM101,404h2v1h-2zM25,405h1v1h-1zM99,405h2v1h-2zM25,406h1v1h-1zM96,406h3v1h-3zM25,407h1v1h-1zM94,407h2v1h-2zM25,408h1v1h-1zM91,408h3v1h-3zM25,409h1v1h-1zM89,409h2v1h-2zM25,410h1v1h-1zM87,410h2v1h-2zM25,411h1v1h-1zM84,411h3v1h-3zM25,412h1v1h-1zM80,412h4v1h-4zM25,413h1v1h-1zM76,413h4v1h-4zM25,414h1v1h-1zM72,414h4v1h-4zM25,415h1v1h-1zM68,415h4v1h-4zM25,416h1v1h-1zM63,416h5v1h-5zM25,417h1v1h-1zM56,417h7v1h-7zM25,418h1v1h-1zM49,418h7v1h-7zM25,419h1v1h-1zM35,419h14v1h-14zM25,420h10v1h-10z"/>
</g>
<g shape-rendering="crispEdges">
<rect x="538" y="168" width="16" height="15" fill="rgb(0,0,255)"/>
<rect x="538" y="183" width="16" height="14" fill="rgb(0,112,255)"/>
<rect x="538" y="197" width="16" height="15" fill="rgb(0,160,240)"/>
<rect x="538" y="212" width="16" height="15" fill="rgb(0,200,215)"/>
<rect x="538" y="227" width="16" height="15" fill="rgb(0,220,160)"/>
<rect x="538" y="242" width="16" height="14" fill="rgb(0,235,60)"/>
<rect x="538" y="256" width="16" height="15" fill="rgb(0,255,0)"/>
<rect x="538" y="271" width="16" height="15" fill="rgb(180,255,0)"/>
<rect x="538" y="286" width="16" height="14" fill="rgb(255,255,40)"/>
<rect x="538" y="300" width="16" height="16" fill="rgb(255,220,0)"/>
<rect x="538" y="316" width="16" height="15" fill="rgb(255,170,0)"/>
<rect x="538" y="331" width="16" height="14" fill="rgb(255,130,0)"/>
<rect x="538" y="345" width="16" height="15" fill="rgb(255,98,0)"/>
<rect x="538" y="360" width="16" height="16" fill="rgb(255,0,0)"/>
</g>
<g filter="url(#px)">
<text x="568 576 584 592 600 608 616 624" y="170">2.897E-0</text>
<text x="568 576 584 592 600 608 616 624" y="184">2.899E-0</text>
<text x="568 576 584 592 600 608 616 624" y="198">2.901E-0</text>
<text x="568 576 584 592 600 608 616 624" y="212">2.903E-0</text>
<text x="568 576 584 592 600 608 616 624" y="226">2.905E-0</text>
<text x="568 576 584 592 600 608 616 624" y="240">2.907E-0</text>
<text x="568 576 584 592 600 608 616 624" y="254">2.909E-0</text>
<text x="568 576 584 592 600 608 616 624" y="268">2.911E-0</text>
<text x="568 576 584 592 600 608 616 624" y="282">2.913E-0</text>
<text x="568 576 584 592 600 608 616 624" y="296">2.915E-0</text>
<text x="568 576 584 592 600 608 616 624" y="310">2.917E-0</text>
<text x="568 576 584 592 600 608 616 624" y="324">2.919E-0</text>
<text x="568 576 584 592 600 608 616 624" y="338">2.921E-0</text>
<text x="568 576 584 592 600 608 616 624" y="352">2.923E-0</text>
<text x="568 576 584 592 600 608 616 624" y="366">2.925E-0</text>
<text x="568 576 584 592 600 608 616 624" y="380">2.927E-0</text>
<text x="51 59 67 75 83 91 99 107 115 123 131 139 147 155 163 171 179 187 195 203 211 219 227 235 243" y="472">1.4400E+00 1.7857E-01 200</text>
<text x="422 430 438 446 454 462 470 478" y="472">PHOENICS</text>
<text x="575" y="400">Y</text>
<text x="615" y="440">X</text>
</g>
<g stroke="#fff" fill="none" stroke-width="1" shape-rendering="crispEdges">
<path d="M577.5,407.5 L577.5,436.5 L608.5,436.5"/>
<path d="M574.5,413.5 L577.5,407.5 L580.5,413.5"/>
<path d="M602.5,433.5 L608.5,436.5 L602.5,439.5"/>
</g>
<g stroke="#fff" stroke-width="1" shape-rendering="crispEdges">
<path fill="#0000ff" d="M576.60,24.12 L574.16,24.55 L571.76,25.14 L569.41,25.91 L567.12,26.85 L564.91,27.94 L562.77,29.20 L560.74,30.60 L558.80,32.14 L556.99,33.82 L555.30,35.63 L553.74,37.55 L552.32,39.58 L551.06,41.70 L549.94,43.91 L548.99,46.19 L548.21,48.54 L547.60,50.94 L547.15,53.37 L546.89,55.83 L546.80,58.30 L546.89,60.77 L547.15,63.23 L547.60,65.66 L548.21,68.06 L548.99,70.41 L549.94,72.69 L551.06,74.90 L552.32,77.02 L553.74,79.05 L555.30,80.97 L556.99,82.78 L558.80,84.46 L560.74,86.00 L562.77,87.40 L564.91,88.66 L567.12,89.75 L569.41,90.69 L571.76,91.46 L574.16,92.05 L576.60,92.48 L582.70,87.25 L588.30,82.10 L592.50,78.30 L591.10,76.90 L587.40,77.40 L574.25,77.90 L569.50,75.10 L565.30,71.30 L562.50,65.70 L560.80,58.00 L562.10,51.30 L564.90,47.50 L567.70,43.80 L571.50,41.40 L575.70,39.10 L585.50,39.60 L591.10,41.00 L592.50,38.20 L590.20,35.40 L585.50,32.10 L580.80,27.90 Z"/>
<path fill="#00ff00" d="M583.00,23.84 L585.59,24.07 L588.15,24.49 L590.67,25.10 L593.14,25.90 L595.55,26.88 L597.87,28.04 L600.10,29.37 L602.22,30.87 L604.22,32.52 L606.10,34.31 L607.83,36.25 L609.42,38.31 L610.84,40.48 L612.10,42.75 L613.18,45.11 L614.08,47.54 L614.80,50.04 L615.32,52.58 L615.66,55.16 L615.80,57.75 L615.74,60.34 L615.49,62.93 L615.04,65.49 L614.41,68.00 L613.58,70.47 L612.58,72.86 L611.39,75.17 L610.04,77.39 L608.52,79.49 L606.85,81.48 L605.04,83.34 L603.09,85.05 L601.01,86.61 L598.83,88.02 L596.54,89.25 L594.17,90.31 L591.73,91.19 L589.23,91.88 L586.68,92.38 L584.10,92.69 L591.10,87.25 L597.70,82.50 L598.60,76.90 L597.20,73.70 L593.90,71.30 L587.40,71.80 L583.60,73.20 L578.00,73.20 L573.30,70.80 L569.50,67.50 L567.20,61.00 L566.75,57.90 L567.70,53.20 L570.50,48.50 L575.20,45.70 L580.80,43.80 L587.40,45.20 L591.60,46.60 L594.90,45.20 L598.60,41.90 L598.60,37.25 L596.75,32.50 L593.00,29.75 L586.40,26.00 Z"/>
</g>
</svg></body></html>
